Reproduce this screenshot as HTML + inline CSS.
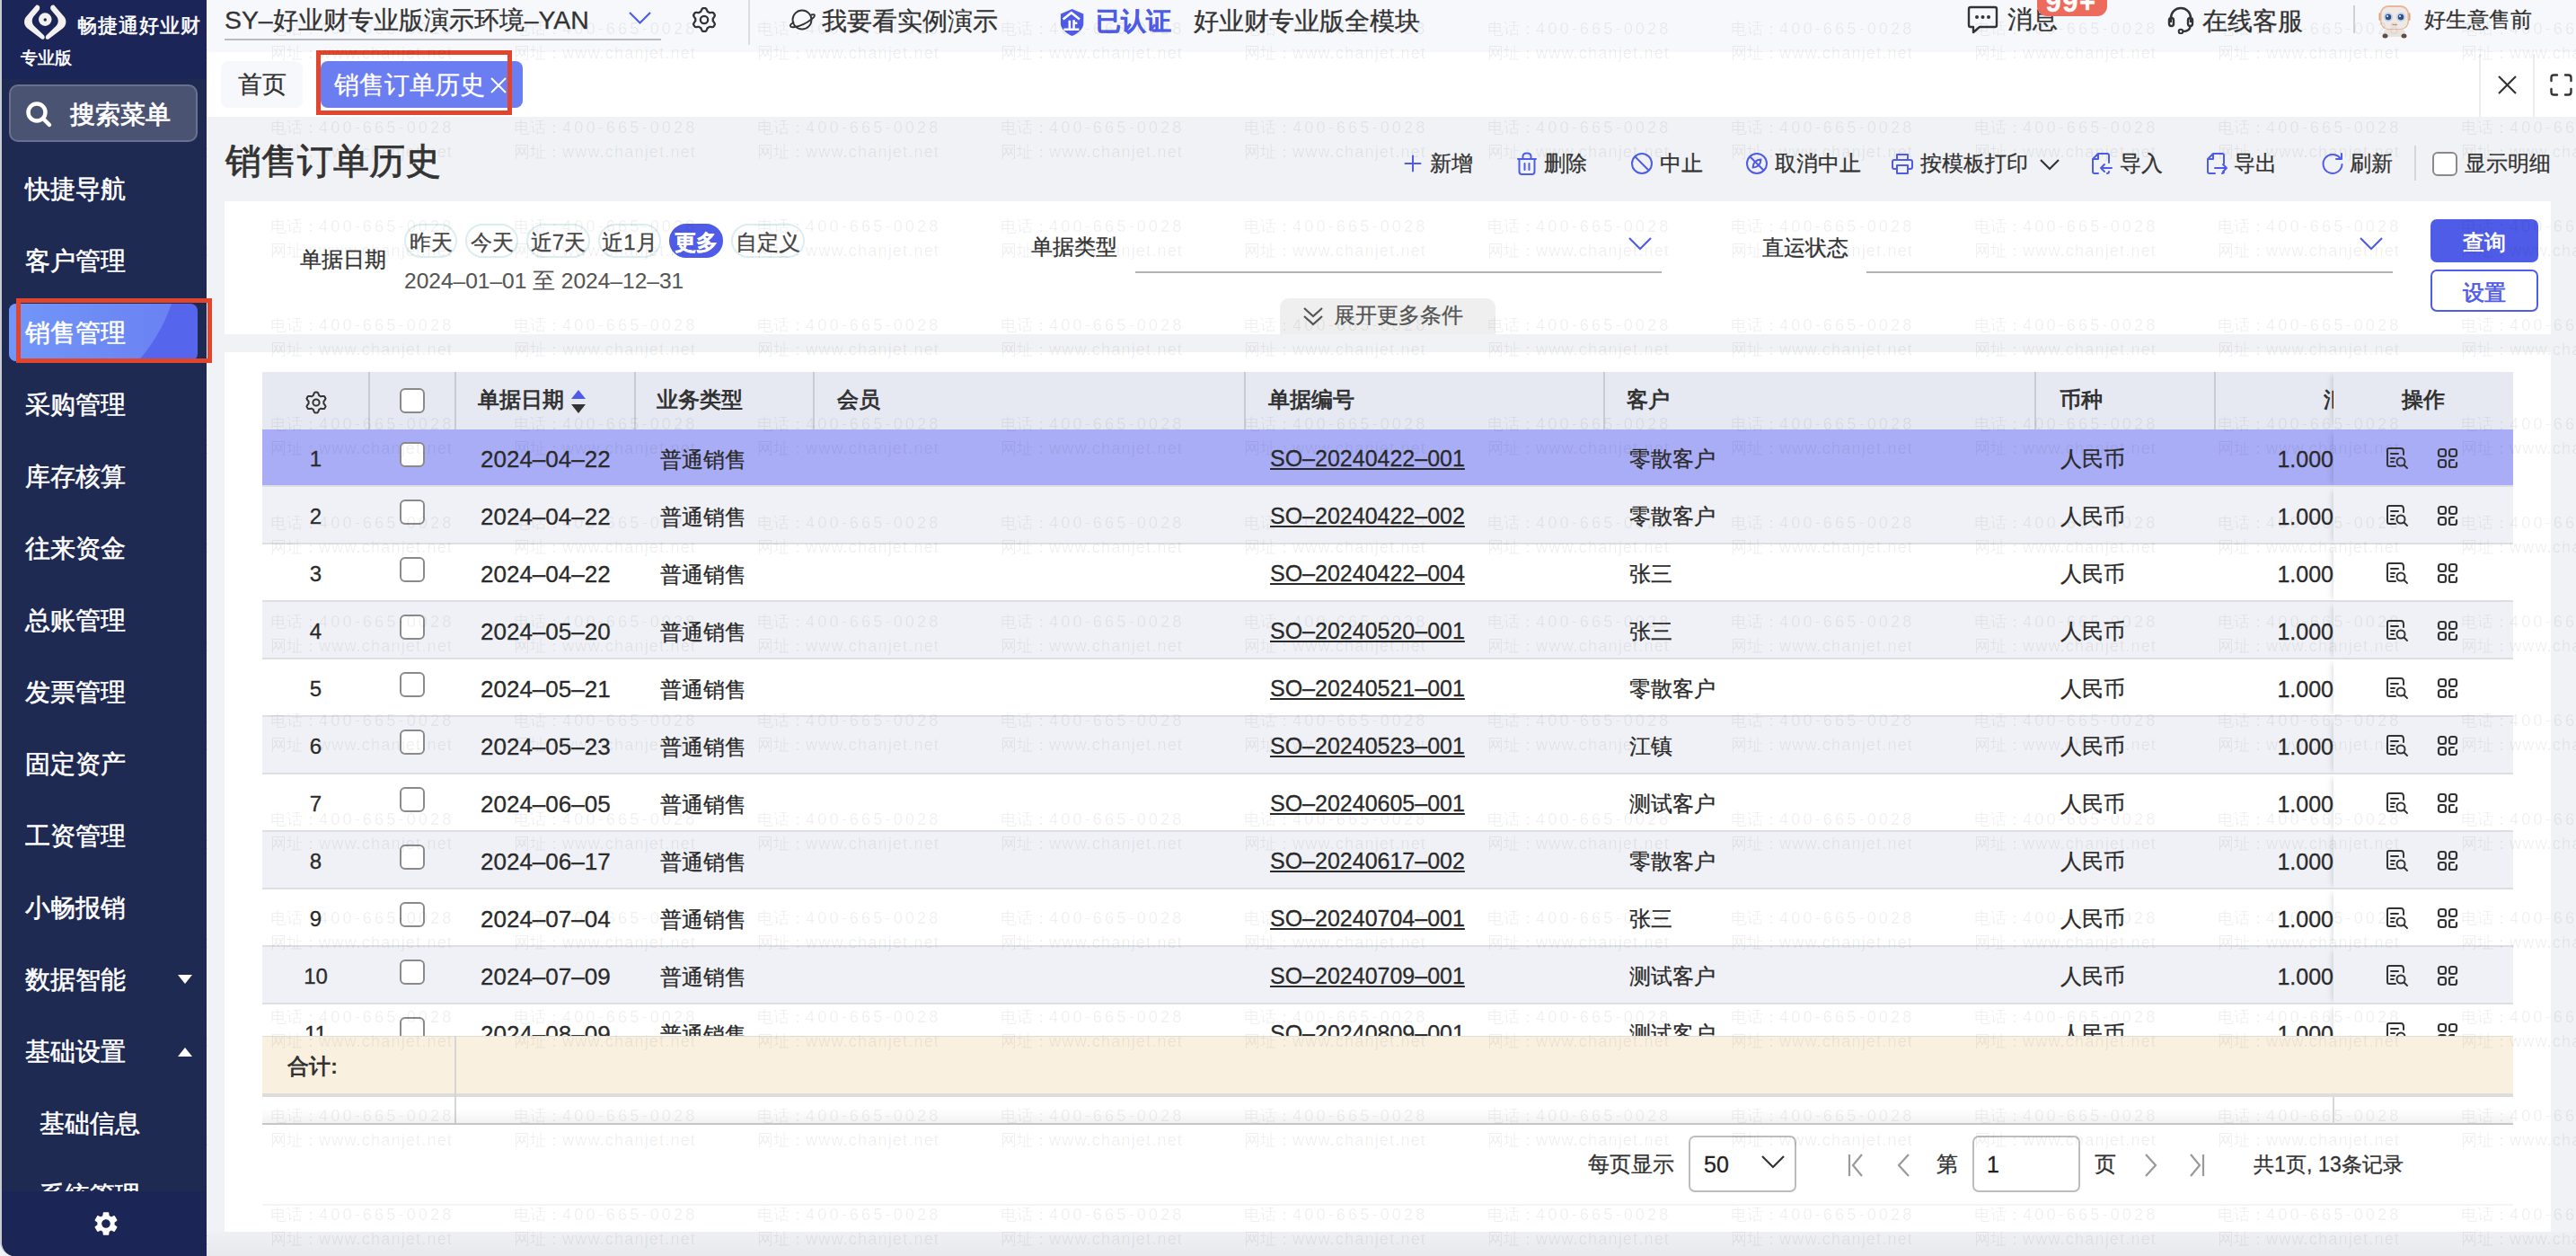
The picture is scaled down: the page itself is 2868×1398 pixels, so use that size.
<!DOCTYPE html><html><head><meta charset="utf-8"><style>
*{box-sizing:border-box;margin:0;padding:0}
html,body{width:2868px;height:1398px;overflow:hidden;background:#f1f2f5;font-family:"Liberation Sans",sans-serif;color:#333}
body{-webkit-text-stroke:0.3px}
.abs{position:absolute;white-space:nowrap}
#sb{position:absolute;left:0;top:0;width:230px;height:1398px;background:#1f2a52;border-left:2px solid #c9cbd2;border-bottom-left-radius:16px;overflow:hidden}
.mi{position:absolute;left:26px;font-size:28px;line-height:32px;color:#fff;-webkit-text-stroke:0.55px #fff}
#top{position:absolute;left:230px;top:0;width:2638px;height:58px;background:#f7f8fc}
#tabs{position:absolute;left:230px;top:58px;width:2638px;height:72px;background:#fff}
.t28{font-size:28px;line-height:32px;color:#333}
.card{position:absolute;background:#fff}
.tb{position:absolute;top:166px;font-size:24px;line-height:32px;color:#333}
.tb svg{position:absolute}
.chip{position:absolute;top:249px;height:38px;border:2px solid #dcedef;border-radius:19px;font-size:24px;line-height:38px;text-align:center;color:#444}
.hd{position:absolute;top:414px;height:64px;background:#e6e9f2}
.th{position:absolute;font-size:24px;line-height:32px;font-weight:bold;color:#333;-webkit-text-stroke:0}
.row{position:absolute;left:292px;width:2506px;height:64px;border-bottom:2px solid #dedfe3}
.td{position:absolute;font-size:24px;line-height:32px;color:#2a2a2a}
.wm{position:absolute;white-space:nowrap;font-size:18px;line-height:27px;-webkit-text-stroke:0.25px}
.cb{position:absolute;width:28px;height:28px;border:2px solid #8a8a8a;border-radius:6px;background:#fff}
</style></head><body>

<div id="sb">
<div class="abs" style="left:0;top:0;width:230px;height:88px;background:#1c2558"></div>
<svg class="abs" style="left:23px;top:3.5px" width="50.5" height="41" viewBox="0 0 52 42" preserveAspectRatio="none">
<path d="M16 1.5 C19.5 1 21 4.5 19 7.5 L12.5 15 C10.5 18 10.5 22 13 25 L24.5 36 C26.5 38.5 25 41.5 22 40.5 L6 28.5 C1 24.5 1 18 5 14 Z" fill="#f2f1f0"/>
<path d="M36 1.5 C32.5 1 31 4.5 33 7.5 L39.5 15 C41.5 18 41.5 22 39 25 L27.5 36 C25.5 38.5 27 41.5 30 40.5 L46 28.5 C51 24.5 51 18 47 14 Z" fill="#f2f1f0"/>
<circle cx="26" cy="18" r="7.5" fill="#f2f1f0"/><circle cx="26" cy="18.5" r="1.8" fill="#1f2a52"/>
</svg>
<div class="abs" style="left:84px;top:16px;font-size:22px;line-height:26px;color:#fff;-webkit-text-stroke:0.6px #fff;letter-spacing:1px">畅捷通好业财</div>
<div class="abs" style="left:21px;top:53px;font-size:19px;line-height:24px;color:#fff;-webkit-text-stroke:0.6px #fff">专业版</div>
<div class="abs" style="left:8px;top:94px;width:210px;height:64px;background:#4b5373;border:2px solid #6a7190;border-radius:10px"></div>
<svg class="abs" style="left:26px;top:112px" width="32" height="32" viewBox="0 0 32 32"><circle cx="13" cy="13" r="9.5" fill="none" stroke="#fff" stroke-width="4.5"/><path d="M20 20 L27 27" stroke="#fff" stroke-width="4.5" stroke-linecap="round"/></svg>
<div class="abs" style="left:76px;top:111px;font-size:28px;line-height:34px;color:#fff;-webkit-text-stroke:0.8px #fff">搜索菜单</div>
<div class="abs" style="left:8px;top:338px;width:210px;height:64px;border-radius:8px;background:#5565ec;overflow:hidden">
<div style="position:absolute;left:-184px;top:-248px;width:375px;height:375px;border-radius:50%;background:linear-gradient(90deg,#7196f8 50%,#6a80f2 100%)"></div></div>
<div class="mi" style="top:195px">快捷导航</div>
<div class="mi" style="top:275px">客户管理</div>
<div class="mi" style="top:355px">销售管理</div>
<div class="mi" style="top:435px">采购管理</div>
<div class="mi" style="top:515px">库存核算</div>
<div class="mi" style="top:595px">往来资金</div>
<div class="mi" style="top:675px">总账管理</div>
<div class="mi" style="top:755px">发票管理</div>
<div class="mi" style="top:835px">固定资产</div>
<div class="mi" style="top:915px">工资管理</div>
<div class="mi" style="top:995px">小畅报销</div>
<div class="mi" style="top:1075px">数据智能</div>
<div class="mi" style="top:1155px">基础设置</div>
<div class="mi" style="left:42px;top:1235px">基础信息</div>
<div class="mi" style="left:42px;top:1315px">系统管理</div>
<svg class="abs" style="left:194px;top:1084px" width="20" height="12"><path d="M2 1 L18 1 L10 11 Z" fill="#fff"/></svg>
<svg class="abs" style="left:194px;top:1165px" width="20" height="12"><path d="M2 11 L18 11 L10 1 Z" fill="#fff"/></svg>
<div class="abs" style="left:0;top:1326px;width:230px;height:72px;background:#1b2657"></div>
<svg class="abs" style="left:100px;top:1346px" width="32" height="32" viewBox="0 0 24 24"><path fill="#fff" d="M19.14 12.94c.04-.3.06-.61.06-.94 0-.32-.02-.64-.07-.94l2.03-1.58a.49.49 0 0 0 .12-.61l-1.92-3.32a.488.488 0 0 0-.59-.22l-2.39.96c-.5-.38-1.03-.7-1.62-.94l-.36-2.54a.484.484 0 0 0-.48-.41h-3.84c-.24 0-.43.17-.47.41l-.36 2.54c-.59.24-1.13.57-1.62.94l-2.39-.96c-.22-.08-.47 0-.59.22L2.74 8.87c-.12.21-.08.47.12.61l2.03 1.58c-.05.3-.09.63-.09.94s.02.64.07.94l-2.03 1.58a.49.49 0 0 0-.12.61l1.92 3.32c.12.22.37.29.59.22l2.39-.96c.5.38 1.03.7 1.62.94l.36 2.54c.05.24.24.41.48.41h3.84c.24 0 .44-.17.47-.41l.36-2.54c.59-.24 1.13-.56 1.62-.94l2.39.96c.22.08.47 0 .59-.22l1.92-3.32c.12-.22.07-.47-.12-.61l-2.01-1.58zM12 15.6c-1.98 0-3.6-1.62-3.6-3.6s1.62-3.6 3.6-3.6 3.6 1.62 3.6 3.6-1.62 3.6-3.6 3.6z"/></svg>
</div>
<div id="top"></div>
<div class="abs t28" style="left:250px;top:6px;font-size:28.4px">SY–好业财专业版演示环境–YAN</div>
<div class="abs" style="left:250px;top:43px;width:486px;height:2px;background:#b9bbc2"></div>
<svg class="abs" style="left:699px;top:12px" width="27" height="16"><path d="M2 2 L13.5 13.5 L25 2" fill="none" stroke="#4f5ce8" stroke-width="2.2"/></svg>
<svg class="abs" style="left:769px;top:7px" width="30" height="30" viewBox="0 0 30 30"><path fill="none" stroke="#333" stroke-width="2.3" stroke-linejoin="round" d="M15.00 2.10 L15.56 2.11 L16.12 2.15 L16.68 2.23 L17.16 2.75 L17.58 3.37 L17.94 4.04 L18.24 4.71 L18.51 5.35 L18.76 5.93 L19.14 6.12 L19.53 6.31 L19.90 6.51 L20.27 6.73 L20.62 6.97 L20.98 7.21 L21.60 7.14 L22.29 7.05 L23.03 6.97 L23.78 6.95 L24.53 7.01 L25.22 7.16 L25.57 7.60 L25.88 8.07 L26.17 8.55 L26.44 9.04 L26.69 9.55 L26.90 10.07 L26.69 10.75 L26.36 11.42 L25.96 12.06 L25.53 12.66 L25.11 13.22 L24.73 13.72 L24.76 14.15 L24.79 14.57 L24.80 15.00 L24.79 15.43 L24.76 15.85 L24.73 16.28 L25.11 16.78 L25.53 17.34 L25.96 17.94 L26.36 18.58 L26.69 19.25 L26.90 19.93 L26.69 20.45 L26.44 20.96 L26.17 21.45 L25.88 21.93 L25.57 22.40 L25.22 22.84 L24.53 22.99 L23.78 23.05 L23.03 23.03 L22.29 22.95 L21.60 22.86 L20.98 22.79 L20.62 23.03 L20.27 23.27 L19.90 23.49 L19.53 23.69 L19.14 23.88 L18.76 24.07 L18.51 24.65 L18.24 25.29 L17.94 25.96 L17.58 26.63 L17.16 27.25 L16.68 27.77 L16.12 27.85 L15.56 27.89 L15.00 27.90 L14.44 27.89 L13.88 27.85 L13.32 27.77 L12.84 27.25 L12.42 26.63 L12.06 25.96 L11.76 25.29 L11.49 24.65 L11.24 24.07 L10.86 23.88 L10.47 23.69 L10.10 23.49 L9.73 23.27 L9.38 23.03 L9.02 22.79 L8.40 22.86 L7.71 22.95 L6.97 23.03 L6.22 23.05 L5.47 22.99 L4.78 22.84 L4.43 22.40 L4.12 21.93 L3.83 21.45 L3.56 20.96 L3.31 20.45 L3.10 19.93 L3.31 19.25 L3.64 18.58 L4.04 17.94 L4.47 17.34 L4.89 16.78 L5.27 16.28 L5.24 15.85 L5.21 15.43 L5.20 15.00 L5.21 14.57 L5.24 14.15 L5.27 13.72 L4.89 13.22 L4.47 12.66 L4.04 12.06 L3.64 11.42 L3.31 10.75 L3.10 10.07 L3.31 9.55 L3.56 9.04 L3.83 8.55 L4.12 8.07 L4.43 7.60 L4.78 7.16 L5.47 7.01 L6.22 6.95 L6.97 6.97 L7.71 7.05 L8.40 7.14 L9.02 7.21 L9.38 6.97 L9.73 6.73 L10.10 6.51 L10.47 6.31 L10.86 6.12 L11.24 5.93 L11.49 5.35 L11.76 4.71 L12.06 4.04 L12.42 3.37 L12.84 2.75 L13.32 2.23 L13.88 2.15 L14.44 2.11 Z"/><circle cx="15" cy="15" r="4.2" fill="none" stroke="#333" stroke-width="2.3"/></svg>
<div class="abs" style="left:833px;top:0;width:2px;height:50px;background:#dcdde2"></div>
<svg class="abs" style="left:877px;top:9px" width="32" height="26" viewBox="0 0 32 26"><circle cx="16" cy="13" r="10.5" fill="none" stroke="#333" stroke-width="1.9"/><path d="M6.5 16 C1 19 2 22 8 21 C14 20 22 16 27 12 C31 9 31 6 26.5 7.5" fill="none" stroke="#333" stroke-width="1.9" stroke-linecap="round"/></svg>
<div class="abs t28" style="left:915px;top:8px">我要看实例演示</div>
<svg class="abs" style="left:1180px;top:9px" width="28" height="32" viewBox="0 0 28 32"><path d="M13.6 0.9 L26.3 6.5 L26.3 17.4 C26.3 23 20 28 13.6 31 C7.2 28 0.9 23 0.9 17.4 L0.9 6.5 Z" fill="#4f5ce8"/><path d="M3.6 12.6 L12.8 5.2 L22 12.6 M10.8 13.8 V23.6 M15.6 13.2 V23.6 M15.6 16.8 H19.4 M4.4 23.8 H21.4" fill="none" stroke="#fff" stroke-width="2.6"/></svg>
<div class="abs t28" style="left:1220px;top:8px;color:#4f5ce8;font-weight:bold">已认证</div>
<div class="abs t28" style="left:1329px;top:8px">好业财专业版全模块</div>
<svg class="abs" style="left:2190px;top:5px" width="35" height="34" viewBox="0 0 35 34"><path d="M4 3 H31 C32.5 3 33 3.5 33 5 V23 C33 24.5 32.5 25 31 25 H14 L7 31 V25 H4 C2.5 25 2 24.5 2 23 V5 C2 3.5 2.5 3 4 3 Z" fill="none" stroke="#333" stroke-width="2.4" stroke-linejoin="round"/><circle cx="11" cy="14" r="2" fill="#333"/><circle cx="17.5" cy="14" r="2" fill="#333"/><circle cx="24" cy="14" r="2" fill="#333"/></svg>
<div class="abs t28" style="left:2235px;top:6px">消息</div>
<div class="abs" style="left:2268px;top:-14px;width:78px;height:32px;background:#ec6b5c;border-radius:11px"></div>
<div class="abs" style="left:2266px;top:-13px;width:80px;font-size:31px;line-height:31px;color:#fff;font-weight:bold;text-align:center;letter-spacing:1.5px">99+</div>
<svg class="abs" style="left:2412px;top:6px" width="32" height="32" viewBox="0 0 32 32"><path d="M5 19 V14 C5 7.5 10 3 16 3 C22 3 27 7.5 27 14 V19" fill="none" stroke="#333" stroke-width="2.4"/><rect x="3" y="14" width="5" height="9" rx="2.5" fill="none" stroke="#333" stroke-width="2.4"/><rect x="24" y="14" width="5" height="9" rx="2.5" fill="none" stroke="#333" stroke-width="2.4"/><path d="M26.5 23 C26.5 27 23 29 18 29" fill="none" stroke="#333" stroke-width="2.4"/><circle cx="16" cy="29" r="2.3" fill="none" stroke="#333" stroke-width="2"/></svg>
<div class="abs t28" style="left:2452px;top:8px">在线客服</div>
<div class="abs" style="left:2620px;top:6px;width:2px;height:31px;background:#d0d1d6"></div>
<svg class="abs" style="left:2646px;top:4px" width="40" height="40" viewBox="0 0 40 40"><path d="M8 33 C8 29 11 28 14 28 H26 C29 28 32 29 32 33 V37 H8 Z" fill="#e9e3de"/><ellipse cx="9.5" cy="36" rx="3" ry="2.5" fill="#5e4c45"/><ellipse cx="30.5" cy="36" rx="3" ry="2.5" fill="#5e4c45"/><rect x="2.5" y="10" width="3" height="9" rx="1.5" fill="#d9a486"/><rect x="34.5" y="10" width="3" height="9" rx="1.5" fill="#d9a486"/><rect x="4" y="2" width="32" height="27" rx="9" fill="#e8b89a"/><rect x="5.5" y="4" width="29" height="24" rx="8" fill="#efe9e5"/><circle cx="13" cy="15" r="5" fill="#bcd0ea"/><circle cx="27" cy="15" r="5" fill="#bcd0ea"/><circle cx="13" cy="15" r="3.2" fill="#2f4f86"/><circle cx="27" cy="15" r="3.2" fill="#2f4f86"/><circle cx="12" cy="14" r="1" fill="#fff"/><circle cx="26" cy="14" r="1" fill="#fff"/><path d="M17.5 23 Q20 24.5 22.5 23" stroke="#c9805e" stroke-width="1.2" fill="none"/></svg>
<div class="abs" style="left:2699px;top:6px;font-size:24px;line-height:32px;color:#333">好生意售前</div>
<div id="tabs"></div>
<div class="abs" style="left:246px;top:68px;width:91px;height:52px;background:#f6f8fc;border-radius:8px"></div>
<div class="abs t28" style="left:265px;top:78px;font-size:27px">首页</div>
<div class="abs" style="left:357px;top:68px;width:225px;height:52px;background:#6a7ef1;border-radius:8px"></div>
<div class="abs t28" style="left:372px;top:79px;font-size:28px;color:#fff">销售订单历史</div>
<svg class="abs" style="left:545px;top:85px" width="20" height="20"><path d="M2 2 L18 18 M18 2 L2 18" stroke="#fff" stroke-width="2"/></svg>
<div class="abs" style="left:2760px;top:60px;width:2px;height:70px;background:#ececef"></div>
<div class="abs" style="left:2820px;top:60px;width:2px;height:70px;background:#ececef"></div>
<svg class="abs" style="left:2780px;top:83px" width="23" height="23"><path d="M2 2 L21 21 M21 2 L2 21" stroke="#333" stroke-width="2.2"/></svg>
<svg class="abs" style="left:2838px;top:81px" width="27" height="27"><path d="M2.5 9 V5.5 Q2.5 2.5 5.5 2.5 H9 M18 2.5 H21.5 Q24.5 2.5 24.5 5.5 V9 M24.5 18 V21.5 Q24.5 24.5 21.5 24.5 H18 M9 24.5 H5.5 Q2.5 24.5 2.5 21.5 V18" fill="none" stroke="#333" stroke-width="2.4" stroke-linecap="round"/></svg>
<div class="abs" style="left:251px;top:155px;font-size:40px;line-height:48px;color:#333;-webkit-text-stroke:0.8px #333">销售订单历史</div>
<svg class="abs" style="left:1559px;top:168px" width="28" height="28" viewBox="0 0 28 28"><path d="M14 5.5 V22.5 M5.5 14 H22.5" fill="none" stroke="#4f5ce8" stroke-width="2" stroke-linecap="round" stroke-linejoin="round"/></svg>
<div class="tb" style="left:1592px">新增</div>
<svg class="abs" style="left:1686px;top:168px" width="28" height="28" viewBox="0 0 28 28"><path d="M5.5 9 V23 C5.5 25 6.5 26 8.5 26 H19.5 C21.5 26 22.5 25 22.5 23 V9 M4 9 H24 M9.5 9 V6 C9.5 3.5 11 2.5 14 2.5 C17 2.5 18.5 3.5 18.5 6 V9 M11.5 14 V21 M16.5 14 V21" fill="none" stroke="#4f5ce8" stroke-width="2" stroke-linecap="round" stroke-linejoin="round"/></svg>
<div class="tb" style="left:1719px">删除</div>
<svg class="abs" style="left:1814px;top:168px" width="28" height="28" viewBox="0 0 28 28"><circle cx="14" cy="14" r="11" fill="none" stroke="#4f5ce8" stroke-width="2" stroke-linecap="round" stroke-linejoin="round"/><path d="M6.5 6.5 L21.5 21.5" fill="none" stroke="#4f5ce8" stroke-width="2" stroke-linecap="round" stroke-linejoin="round"/></svg>
<div class="tb" style="left:1848px">中止</div>
<svg class="abs" style="left:1942px;top:168px" width="28" height="28" viewBox="0 0 28 28"><circle cx="14" cy="14" r="11" fill="none" stroke="#4f5ce8" stroke-width="2" stroke-linecap="round" stroke-linejoin="round"/><path d="M6.5 6.5 L21.5 21.5" fill="none" stroke="#4f5ce8" stroke-width="2" stroke-linecap="round" stroke-linejoin="round"/><path d="M9.5 18.5 Q10 10 18.5 9.5 Q18 18 9.5 18.5 Z" fill="none" stroke="#4f5ce8" stroke-width="2" stroke-linecap="round" stroke-linejoin="round"/></svg>
<div class="tb" style="left:1976px">取消中止</div>
<svg class="abs" style="left:2104px;top:168px" width="28" height="28" viewBox="0 0 28 28"><path d="M8 10 V4 H20 V10 M8 20 H5 C4 20 3 19 3 18 V12 C3 11 4 10 5 10 H23 C24 10 25 11 25 12 V18 C25 19 24 20 23 20 H20 M8 16 H20 V25 H8 Z" fill="none" stroke="#4f5ce8" stroke-width="2" stroke-linecap="round" stroke-linejoin="round"/></svg>
<div class="tb" style="left:2138px">按模板打印</div>
<svg class="abs" style="left:2270px;top:175px" width="24" height="16"><path d="M2 3 L12 13 L22 3" fill="none" stroke="#333" stroke-width="2.2"/></svg>
<svg class="abs" style="left:2326px;top:168px" width="28" height="28" viewBox="0 0 28 28"><path d="M22 13 V5 C22 4 21 3 20 3 H10 L4 9 V23 C4 24 5 25 6 25 H10 M10 3 V9 H4 M22 23 C22 24 21 25 20 25" fill="none" stroke="#4f5ce8" stroke-width="2" stroke-linecap="round" stroke-linejoin="round"/><path d="M25 19 H13 M17 15 L13 19 L17 23" fill="none" stroke="#4f5ce8" stroke-width="2" stroke-linecap="round" stroke-linejoin="round"/></svg>
<div class="tb" style="left:2360px">导入</div>
<svg class="abs" style="left:2454px;top:168px" width="28" height="28" viewBox="0 0 28 28"><path d="M22 14 V5 C22 4 21 3 20 3 H10 L4 9 V23 C4 24 5 25 6 25 H12 M10 3 V9 H4 M22 23 C22 24 21 25 20 25" fill="none" stroke="#4f5ce8" stroke-width="2" stroke-linecap="round" stroke-linejoin="round"/><path d="M12 19 H25 M21 15 L25 19 L21 23" fill="none" stroke="#4f5ce8" stroke-width="2" stroke-linecap="round" stroke-linejoin="round"/></svg>
<div class="tb" style="left:2487px">导出</div>
<svg class="abs" style="left:2583px;top:168px" width="28" height="28" viewBox="0 0 28 28"><path d="M23 9 A10.5 10.5 0 1 0 24.5 15" fill="none" stroke="#4f5ce8" stroke-width="2" stroke-linecap="round" stroke-linejoin="round"/><path d="M24 3 V9 H18" fill="none" stroke="#4f5ce8" stroke-width="2" stroke-linecap="round" stroke-linejoin="round"/></svg>
<div class="tb" style="left:2616px">刷新</div>
<div class="abs" style="left:2688px;top:162px;width:2px;height:39px;background:#d5d6db"></div>
<div class="cb" style="left:2708px;top:169px;width:28px;height:27px;"></div>
<div class="tb" style="left:2744px">显示明细</div>
<div class="card" style="left:250px;top:224px;width:2590px;height:148px"></div>
<div class="abs" style="left:334px;top:273px;font-size:24px;line-height:32px;color:#333">单据日期</div>
<div class="chip" style="left:450px;width:59px">昨天</div>
<div class="chip" style="left:518px;width:59px">今天</div>
<div class="chip" style="left:586px;width:71px">近7天</div>
<div class="chip" style="left:666px;width:70px">近1月</div>
<div class="chip" style="left:745px;width:60px;background:#4f5ce8;border-color:#4f5ce8;color:#fff;font-weight:bold">更多</div>
<div class="chip" style="left:814px;width:82px">自定义</div>
<div class="abs" style="left:450px;top:297px;font-size:24.5px;line-height:32px;color:#555;-webkit-text-stroke:0.1px">2024–01–01 至 2024–12–31</div>
<div class="abs" style="left:1148px;top:259px;font-size:24px;line-height:32px;color:#333">单据类型</div>
<div class="abs" style="left:1264px;top:302px;width:586px;height:2px;background:#b3b3b3"></div>
<svg class="abs" style="left:1812px;top:263px" width="28" height="17"><path d="M2 2 L14 14 L26 2" fill="none" stroke="#4f5ce8" stroke-width="2.2"/></svg>
<div class="abs" style="left:1962px;top:260px;font-size:24px;line-height:32px;color:#333">直运状态</div>
<div class="abs" style="left:2078px;top:302px;width:586px;height:2px;background:#b3b3b3"></div>
<svg class="abs" style="left:2626px;top:263px" width="28" height="17"><path d="M2 2 L14 14 L26 2" fill="none" stroke="#4f5ce8" stroke-width="2.2"/></svg>
<div class="abs" style="left:2706px;top:244px;width:120px;height:48px;background:#4f5ce8;border-radius:7px;color:#fff;font-size:24px;line-height:52px;text-align:center;-webkit-text-stroke:0.7px #fff">查询</div>
<div class="abs" style="left:2706px;top:300px;width:120px;height:47px;background:#fff;border:2px solid #4f5ce8;border-radius:7px;color:#4f5ce8;font-size:24px;line-height:47px;text-align:center;-webkit-text-stroke:0.7px #4f5ce8">设置</div>
<div class="abs" style="left:1425px;top:332px;width:240px;height:40px;background:#efefef;border-radius:10px 10px 0 0"></div>
<svg class="abs" style="left:1450px;top:340px" width="24" height="24"><path d="M2 3 L12 12 L22 3 M2 12 L12 21 L22 12" fill="none" stroke="#555" stroke-width="2.2"/></svg>
<div class="abs" style="left:1485px;top:335px;font-size:24px;line-height:32px;color:#555">展开更多条件</div>
<div class="card" style="left:250px;top:392px;width:2590px;height:979px"></div>
<div class="hd" style="left:292px;width:2506px"></div>
<div class="abs" style="left:410px;top:414px;width:2px;height:64px;background:#c9cbd3"></div>
<div class="abs" style="left:506px;top:414px;width:2px;height:64px;background:#c9cbd3"></div>
<div class="abs" style="left:706px;top:414px;width:2px;height:64px;background:#c9cbd3"></div>
<div class="abs" style="left:905px;top:414px;width:2px;height:64px;background:#c9cbd3"></div>
<div class="abs" style="left:1385px;top:414px;width:2px;height:64px;background:#c9cbd3"></div>
<div class="abs" style="left:1785px;top:414px;width:2px;height:64px;background:#c9cbd3"></div>
<div class="abs" style="left:2265px;top:414px;width:2px;height:64px;background:#c9cbd3"></div>
<div class="abs" style="left:2465px;top:414px;width:2px;height:64px;background:#c9cbd3"></div>
<svg class="abs" style="left:338px;top:434px" width="28" height="28" viewBox="0 0 28 28"><path fill="none" stroke="#333" stroke-width="2" stroke-linejoin="round" d="M14.00 2.60 L14.50 2.61 L14.99 2.64 L15.49 2.71 L15.90 3.22 L16.26 3.80 L16.56 4.44 L16.81 5.08 L17.03 5.68 L17.22 6.23 L17.55 6.39 L17.88 6.55 L18.20 6.73 L18.51 6.92 L18.82 7.12 L19.12 7.32 L19.69 7.22 L20.32 7.10 L21.00 7.00 L21.70 6.94 L22.39 6.96 L23.03 7.07 L23.34 7.46 L23.61 7.87 L23.87 8.30 L24.11 8.74 L24.33 9.18 L24.52 9.64 L24.29 10.25 L23.96 10.86 L23.56 11.44 L23.13 11.97 L22.72 12.46 L22.34 12.90 L22.37 13.27 L22.39 13.63 L22.40 14.00 L22.39 14.37 L22.37 14.73 L22.34 15.10 L22.72 15.54 L23.13 16.03 L23.56 16.56 L23.96 17.14 L24.29 17.75 L24.52 18.36 L24.33 18.82 L24.11 19.26 L23.87 19.70 L23.61 20.13 L23.34 20.54 L23.03 20.93 L22.39 21.04 L21.70 21.06 L21.00 21.00 L20.32 20.90 L19.69 20.78 L19.12 20.68 L18.82 20.88 L18.51 21.08 L18.20 21.27 L17.88 21.45 L17.55 21.61 L17.22 21.77 L17.03 22.32 L16.81 22.92 L16.56 23.56 L16.26 24.20 L15.90 24.78 L15.49 25.29 L14.99 25.36 L14.50 25.39 L14.00 25.40 L13.50 25.39 L13.01 25.36 L12.51 25.29 L12.10 24.78 L11.74 24.20 L11.44 23.56 L11.19 22.92 L10.97 22.32 L10.78 21.77 L10.45 21.61 L10.12 21.45 L9.80 21.27 L9.49 21.08 L9.18 20.88 L8.88 20.68 L8.31 20.78 L7.68 20.90 L7.00 21.00 L6.30 21.06 L5.61 21.04 L4.97 20.93 L4.66 20.54 L4.39 20.13 L4.13 19.70 L3.89 19.26 L3.67 18.82 L3.48 18.36 L3.71 17.75 L4.04 17.14 L4.44 16.56 L4.87 16.03 L5.28 15.54 L5.66 15.10 L5.63 14.73 L5.61 14.37 L5.60 14.00 L5.61 13.63 L5.63 13.27 L5.66 12.90 L5.28 12.46 L4.87 11.97 L4.44 11.44 L4.04 10.86 L3.71 10.25 L3.48 9.64 L3.67 9.18 L3.89 8.74 L4.13 8.30 L4.39 7.87 L4.66 7.46 L4.97 7.07 L5.61 6.96 L6.30 6.94 L7.00 7.00 L7.68 7.10 L8.31 7.22 L8.88 7.32 L9.18 7.12 L9.49 6.92 L9.80 6.73 L10.12 6.55 L10.45 6.39 L10.78 6.23 L10.97 5.68 L11.19 5.08 L11.44 4.44 L11.74 3.80 L12.10 3.22 L12.51 2.71 L13.01 2.64 L13.50 2.61 Z"/><circle cx="14" cy="14" r="3.6" fill="none" stroke="#333" stroke-width="2"/></svg>
<div class="cb" style="left:445px;top:432px"></div>
<div class="th" style="left:532px;top:429px">单据日期</div>
<svg class="abs" style="left:634px;top:433px" width="20" height="28"><path d="M10 1 L18 11 H2 Z" fill="#4f5ce8"/><path d="M10 27 L18 17 H2 Z" fill="#333"/></svg>
<div class="th" style="left:731px;top:429px">业务类型</div>
<div class="th" style="left:932px;top:429px">会员</div>
<div class="th" style="left:1412px;top:429px">单据编号</div>
<div class="th" style="left:1811px;top:429px">客户</div>
<div class="th" style="left:2293px;top:429px">币种</div>
<div class="th" style="left:2587px;top:429px">汇率</div>
<div class="abs" style="left:292px;top:478px;width:2506px;height:675px;overflow:hidden">
<div class="row" style="left:0;top:0px;background:#a9adf6"></div>
<div class="td" style="left:0;width:119px;text-align:center;top:17px">1</div>
<div class="cb" style="left:153px;top:14px"></div>
<div class="td" style="left:243px;top:17px;font-size:26px">2024–04–22</div>
<div class="td" style="left:443px;top:18px">普通销售</div>
<div class="td" style="left:1122px;top:16px;font-size:25px;text-decoration:underline;text-underline-offset:2px">SO–20240422–001</div>
<div class="td" style="left:1522px;top:17px">零散客户</div>
<div class="td" style="left:2002px;top:17px">人民币</div>
<div class="td" style="left:2200px;width:106px;text-align:right;top:17px;font-size:25px">1.000</div>
<div class="abs" style="left:2306px;top:0px;width:200px;height:64px;background:#a9adf6;border-bottom:2px solid #dedfe3;box-shadow:-6px 0 6px -4px rgba(0,0,0,0.12)"></div>
<svg class="abs" style="left:2364px;top:19px" width="28" height="26" viewBox="0 0 28 26"><path d="M17 2 H4 C3 2 2 3 2 4 V20 C2 21 3 22 4 22 H11 M20 9 V6 C20 3.5 19 2 17 2 M6 8 H14 M6 13 H10 M6 17 H9" fill="none" stroke="#333" stroke-width="2" stroke-linecap="round"/><circle cx="17" cy="17" r="4.5" fill="none" stroke="#333" stroke-width="2"/><path d="M20.5 20.5 L24 24" stroke="#333" stroke-width="2" stroke-linecap="round"/></svg>
<svg class="abs" style="left:2421px;top:20px" width="24" height="24" viewBox="0 0 24 24"><rect x="2" y="2" width="8" height="8" rx="2.5" fill="none" stroke="#333" stroke-width="2.2"/><rect x="14" y="2" width="8" height="8" rx="2.5" fill="none" stroke="#333" stroke-width="2.2"/><rect x="2" y="14" width="8" height="8" rx="2.5" fill="none" stroke="#333" stroke-width="2.2"/><path d="M22 17 V20 C22 21 21 22 20 22 H16 C15 22 14 21 14 20 V16 C14 15 15 14 16 14 H19" fill="none" stroke="#333" stroke-width="2.2" stroke-linecap="round"/></svg>
<div class="row" style="left:0;top:64px;background:#f0f1f6"></div>
<div class="td" style="left:0;width:119px;text-align:center;top:81px">2</div>
<div class="cb" style="left:153px;top:78px"></div>
<div class="td" style="left:243px;top:81px;font-size:26px">2024–04–22</div>
<div class="td" style="left:443px;top:82px">普通销售</div>
<div class="td" style="left:1122px;top:80px;font-size:25px;text-decoration:underline;text-underline-offset:2px">SO–20240422–002</div>
<div class="td" style="left:1522px;top:81px">零散客户</div>
<div class="td" style="left:2002px;top:81px">人民币</div>
<div class="td" style="left:2200px;width:106px;text-align:right;top:81px;font-size:25px">1.000</div>
<div class="abs" style="left:2306px;top:64px;width:200px;height:64px;background:#f0f1f6;border-bottom:2px solid #dedfe3;box-shadow:-6px 0 6px -4px rgba(0,0,0,0.12)"></div>
<svg class="abs" style="left:2364px;top:83px" width="28" height="26" viewBox="0 0 28 26"><path d="M17 2 H4 C3 2 2 3 2 4 V20 C2 21 3 22 4 22 H11 M20 9 V6 C20 3.5 19 2 17 2 M6 8 H14 M6 13 H10 M6 17 H9" fill="none" stroke="#333" stroke-width="2" stroke-linecap="round"/><circle cx="17" cy="17" r="4.5" fill="none" stroke="#333" stroke-width="2"/><path d="M20.5 20.5 L24 24" stroke="#333" stroke-width="2" stroke-linecap="round"/></svg>
<svg class="abs" style="left:2421px;top:84px" width="24" height="24" viewBox="0 0 24 24"><rect x="2" y="2" width="8" height="8" rx="2.5" fill="none" stroke="#333" stroke-width="2.2"/><rect x="14" y="2" width="8" height="8" rx="2.5" fill="none" stroke="#333" stroke-width="2.2"/><rect x="2" y="14" width="8" height="8" rx="2.5" fill="none" stroke="#333" stroke-width="2.2"/><path d="M22 17 V20 C22 21 21 22 20 22 H16 C15 22 14 21 14 20 V16 C14 15 15 14 16 14 H19" fill="none" stroke="#333" stroke-width="2.2" stroke-linecap="round"/></svg>
<div class="row" style="left:0;top:128px;background:#fff"></div>
<div class="td" style="left:0;width:119px;text-align:center;top:145px">3</div>
<div class="cb" style="left:153px;top:142px"></div>
<div class="td" style="left:243px;top:145px;font-size:26px">2024–04–22</div>
<div class="td" style="left:443px;top:146px">普通销售</div>
<div class="td" style="left:1122px;top:144px;font-size:25px;text-decoration:underline;text-underline-offset:2px">SO–20240422–004</div>
<div class="td" style="left:1522px;top:145px">张三</div>
<div class="td" style="left:2002px;top:145px">人民币</div>
<div class="td" style="left:2200px;width:106px;text-align:right;top:145px;font-size:25px">1.000</div>
<div class="abs" style="left:2306px;top:128px;width:200px;height:64px;background:#fff;border-bottom:2px solid #dedfe3;box-shadow:-6px 0 6px -4px rgba(0,0,0,0.12)"></div>
<svg class="abs" style="left:2364px;top:147px" width="28" height="26" viewBox="0 0 28 26"><path d="M17 2 H4 C3 2 2 3 2 4 V20 C2 21 3 22 4 22 H11 M20 9 V6 C20 3.5 19 2 17 2 M6 8 H14 M6 13 H10 M6 17 H9" fill="none" stroke="#333" stroke-width="2" stroke-linecap="round"/><circle cx="17" cy="17" r="4.5" fill="none" stroke="#333" stroke-width="2"/><path d="M20.5 20.5 L24 24" stroke="#333" stroke-width="2" stroke-linecap="round"/></svg>
<svg class="abs" style="left:2421px;top:148px" width="24" height="24" viewBox="0 0 24 24"><rect x="2" y="2" width="8" height="8" rx="2.5" fill="none" stroke="#333" stroke-width="2.2"/><rect x="14" y="2" width="8" height="8" rx="2.5" fill="none" stroke="#333" stroke-width="2.2"/><rect x="2" y="14" width="8" height="8" rx="2.5" fill="none" stroke="#333" stroke-width="2.2"/><path d="M22 17 V20 C22 21 21 22 20 22 H16 C15 22 14 21 14 20 V16 C14 15 15 14 16 14 H19" fill="none" stroke="#333" stroke-width="2.2" stroke-linecap="round"/></svg>
<div class="row" style="left:0;top:192px;background:#f0f1f6"></div>
<div class="td" style="left:0;width:119px;text-align:center;top:209px">4</div>
<div class="cb" style="left:153px;top:206px"></div>
<div class="td" style="left:243px;top:209px;font-size:26px">2024–05–20</div>
<div class="td" style="left:443px;top:210px">普通销售</div>
<div class="td" style="left:1122px;top:208px;font-size:25px;text-decoration:underline;text-underline-offset:2px">SO–20240520–001</div>
<div class="td" style="left:1522px;top:209px">张三</div>
<div class="td" style="left:2002px;top:209px">人民币</div>
<div class="td" style="left:2200px;width:106px;text-align:right;top:209px;font-size:25px">1.000</div>
<div class="abs" style="left:2306px;top:192px;width:200px;height:64px;background:#f0f1f6;border-bottom:2px solid #dedfe3;box-shadow:-6px 0 6px -4px rgba(0,0,0,0.12)"></div>
<svg class="abs" style="left:2364px;top:211px" width="28" height="26" viewBox="0 0 28 26"><path d="M17 2 H4 C3 2 2 3 2 4 V20 C2 21 3 22 4 22 H11 M20 9 V6 C20 3.5 19 2 17 2 M6 8 H14 M6 13 H10 M6 17 H9" fill="none" stroke="#333" stroke-width="2" stroke-linecap="round"/><circle cx="17" cy="17" r="4.5" fill="none" stroke="#333" stroke-width="2"/><path d="M20.5 20.5 L24 24" stroke="#333" stroke-width="2" stroke-linecap="round"/></svg>
<svg class="abs" style="left:2421px;top:212px" width="24" height="24" viewBox="0 0 24 24"><rect x="2" y="2" width="8" height="8" rx="2.5" fill="none" stroke="#333" stroke-width="2.2"/><rect x="14" y="2" width="8" height="8" rx="2.5" fill="none" stroke="#333" stroke-width="2.2"/><rect x="2" y="14" width="8" height="8" rx="2.5" fill="none" stroke="#333" stroke-width="2.2"/><path d="M22 17 V20 C22 21 21 22 20 22 H16 C15 22 14 21 14 20 V16 C14 15 15 14 16 14 H19" fill="none" stroke="#333" stroke-width="2.2" stroke-linecap="round"/></svg>
<div class="row" style="left:0;top:256px;background:#fff"></div>
<div class="td" style="left:0;width:119px;text-align:center;top:273px">5</div>
<div class="cb" style="left:153px;top:270px"></div>
<div class="td" style="left:243px;top:273px;font-size:26px">2024–05–21</div>
<div class="td" style="left:443px;top:274px">普通销售</div>
<div class="td" style="left:1122px;top:272px;font-size:25px;text-decoration:underline;text-underline-offset:2px">SO–20240521–001</div>
<div class="td" style="left:1522px;top:273px">零散客户</div>
<div class="td" style="left:2002px;top:273px">人民币</div>
<div class="td" style="left:2200px;width:106px;text-align:right;top:273px;font-size:25px">1.000</div>
<div class="abs" style="left:2306px;top:256px;width:200px;height:64px;background:#fff;border-bottom:2px solid #dedfe3;box-shadow:-6px 0 6px -4px rgba(0,0,0,0.12)"></div>
<svg class="abs" style="left:2364px;top:275px" width="28" height="26" viewBox="0 0 28 26"><path d="M17 2 H4 C3 2 2 3 2 4 V20 C2 21 3 22 4 22 H11 M20 9 V6 C20 3.5 19 2 17 2 M6 8 H14 M6 13 H10 M6 17 H9" fill="none" stroke="#333" stroke-width="2" stroke-linecap="round"/><circle cx="17" cy="17" r="4.5" fill="none" stroke="#333" stroke-width="2"/><path d="M20.5 20.5 L24 24" stroke="#333" stroke-width="2" stroke-linecap="round"/></svg>
<svg class="abs" style="left:2421px;top:276px" width="24" height="24" viewBox="0 0 24 24"><rect x="2" y="2" width="8" height="8" rx="2.5" fill="none" stroke="#333" stroke-width="2.2"/><rect x="14" y="2" width="8" height="8" rx="2.5" fill="none" stroke="#333" stroke-width="2.2"/><rect x="2" y="14" width="8" height="8" rx="2.5" fill="none" stroke="#333" stroke-width="2.2"/><path d="M22 17 V20 C22 21 21 22 20 22 H16 C15 22 14 21 14 20 V16 C14 15 15 14 16 14 H19" fill="none" stroke="#333" stroke-width="2.2" stroke-linecap="round"/></svg>
<div class="row" style="left:0;top:320px;background:#f0f1f6"></div>
<div class="td" style="left:0;width:119px;text-align:center;top:337px">6</div>
<div class="cb" style="left:153px;top:334px"></div>
<div class="td" style="left:243px;top:337px;font-size:26px">2024–05–23</div>
<div class="td" style="left:443px;top:338px">普通销售</div>
<div class="td" style="left:1122px;top:336px;font-size:25px;text-decoration:underline;text-underline-offset:2px">SO–20240523–001</div>
<div class="td" style="left:1522px;top:337px">江镇</div>
<div class="td" style="left:2002px;top:337px">人民币</div>
<div class="td" style="left:2200px;width:106px;text-align:right;top:337px;font-size:25px">1.000</div>
<div class="abs" style="left:2306px;top:320px;width:200px;height:64px;background:#f0f1f6;border-bottom:2px solid #dedfe3;box-shadow:-6px 0 6px -4px rgba(0,0,0,0.12)"></div>
<svg class="abs" style="left:2364px;top:339px" width="28" height="26" viewBox="0 0 28 26"><path d="M17 2 H4 C3 2 2 3 2 4 V20 C2 21 3 22 4 22 H11 M20 9 V6 C20 3.5 19 2 17 2 M6 8 H14 M6 13 H10 M6 17 H9" fill="none" stroke="#333" stroke-width="2" stroke-linecap="round"/><circle cx="17" cy="17" r="4.5" fill="none" stroke="#333" stroke-width="2"/><path d="M20.5 20.5 L24 24" stroke="#333" stroke-width="2" stroke-linecap="round"/></svg>
<svg class="abs" style="left:2421px;top:340px" width="24" height="24" viewBox="0 0 24 24"><rect x="2" y="2" width="8" height="8" rx="2.5" fill="none" stroke="#333" stroke-width="2.2"/><rect x="14" y="2" width="8" height="8" rx="2.5" fill="none" stroke="#333" stroke-width="2.2"/><rect x="2" y="14" width="8" height="8" rx="2.5" fill="none" stroke="#333" stroke-width="2.2"/><path d="M22 17 V20 C22 21 21 22 20 22 H16 C15 22 14 21 14 20 V16 C14 15 15 14 16 14 H19" fill="none" stroke="#333" stroke-width="2.2" stroke-linecap="round"/></svg>
<div class="row" style="left:0;top:384px;background:#fff"></div>
<div class="td" style="left:0;width:119px;text-align:center;top:401px">7</div>
<div class="cb" style="left:153px;top:398px"></div>
<div class="td" style="left:243px;top:401px;font-size:26px">2024–06–05</div>
<div class="td" style="left:443px;top:402px">普通销售</div>
<div class="td" style="left:1122px;top:400px;font-size:25px;text-decoration:underline;text-underline-offset:2px">SO–20240605–001</div>
<div class="td" style="left:1522px;top:401px">测试客户</div>
<div class="td" style="left:2002px;top:401px">人民币</div>
<div class="td" style="left:2200px;width:106px;text-align:right;top:401px;font-size:25px">1.000</div>
<div class="abs" style="left:2306px;top:384px;width:200px;height:64px;background:#fff;border-bottom:2px solid #dedfe3;box-shadow:-6px 0 6px -4px rgba(0,0,0,0.12)"></div>
<svg class="abs" style="left:2364px;top:403px" width="28" height="26" viewBox="0 0 28 26"><path d="M17 2 H4 C3 2 2 3 2 4 V20 C2 21 3 22 4 22 H11 M20 9 V6 C20 3.5 19 2 17 2 M6 8 H14 M6 13 H10 M6 17 H9" fill="none" stroke="#333" stroke-width="2" stroke-linecap="round"/><circle cx="17" cy="17" r="4.5" fill="none" stroke="#333" stroke-width="2"/><path d="M20.5 20.5 L24 24" stroke="#333" stroke-width="2" stroke-linecap="round"/></svg>
<svg class="abs" style="left:2421px;top:404px" width="24" height="24" viewBox="0 0 24 24"><rect x="2" y="2" width="8" height="8" rx="2.5" fill="none" stroke="#333" stroke-width="2.2"/><rect x="14" y="2" width="8" height="8" rx="2.5" fill="none" stroke="#333" stroke-width="2.2"/><rect x="2" y="14" width="8" height="8" rx="2.5" fill="none" stroke="#333" stroke-width="2.2"/><path d="M22 17 V20 C22 21 21 22 20 22 H16 C15 22 14 21 14 20 V16 C14 15 15 14 16 14 H19" fill="none" stroke="#333" stroke-width="2.2" stroke-linecap="round"/></svg>
<div class="row" style="left:0;top:448px;background:#f0f1f6"></div>
<div class="td" style="left:0;width:119px;text-align:center;top:465px">8</div>
<div class="cb" style="left:153px;top:462px"></div>
<div class="td" style="left:243px;top:465px;font-size:26px">2024–06–17</div>
<div class="td" style="left:443px;top:466px">普通销售</div>
<div class="td" style="left:1122px;top:464px;font-size:25px;text-decoration:underline;text-underline-offset:2px">SO–20240617–002</div>
<div class="td" style="left:1522px;top:465px">零散客户</div>
<div class="td" style="left:2002px;top:465px">人民币</div>
<div class="td" style="left:2200px;width:106px;text-align:right;top:465px;font-size:25px">1.000</div>
<div class="abs" style="left:2306px;top:448px;width:200px;height:64px;background:#f0f1f6;border-bottom:2px solid #dedfe3;box-shadow:-6px 0 6px -4px rgba(0,0,0,0.12)"></div>
<svg class="abs" style="left:2364px;top:467px" width="28" height="26" viewBox="0 0 28 26"><path d="M17 2 H4 C3 2 2 3 2 4 V20 C2 21 3 22 4 22 H11 M20 9 V6 C20 3.5 19 2 17 2 M6 8 H14 M6 13 H10 M6 17 H9" fill="none" stroke="#333" stroke-width="2" stroke-linecap="round"/><circle cx="17" cy="17" r="4.5" fill="none" stroke="#333" stroke-width="2"/><path d="M20.5 20.5 L24 24" stroke="#333" stroke-width="2" stroke-linecap="round"/></svg>
<svg class="abs" style="left:2421px;top:468px" width="24" height="24" viewBox="0 0 24 24"><rect x="2" y="2" width="8" height="8" rx="2.5" fill="none" stroke="#333" stroke-width="2.2"/><rect x="14" y="2" width="8" height="8" rx="2.5" fill="none" stroke="#333" stroke-width="2.2"/><rect x="2" y="14" width="8" height="8" rx="2.5" fill="none" stroke="#333" stroke-width="2.2"/><path d="M22 17 V20 C22 21 21 22 20 22 H16 C15 22 14 21 14 20 V16 C14 15 15 14 16 14 H19" fill="none" stroke="#333" stroke-width="2.2" stroke-linecap="round"/></svg>
<div class="row" style="left:0;top:512px;background:#fff"></div>
<div class="td" style="left:0;width:119px;text-align:center;top:529px">9</div>
<div class="cb" style="left:153px;top:526px"></div>
<div class="td" style="left:243px;top:529px;font-size:26px">2024–07–04</div>
<div class="td" style="left:443px;top:530px">普通销售</div>
<div class="td" style="left:1122px;top:528px;font-size:25px;text-decoration:underline;text-underline-offset:2px">SO–20240704–001</div>
<div class="td" style="left:1522px;top:529px">张三</div>
<div class="td" style="left:2002px;top:529px">人民币</div>
<div class="td" style="left:2200px;width:106px;text-align:right;top:529px;font-size:25px">1.000</div>
<div class="abs" style="left:2306px;top:512px;width:200px;height:64px;background:#fff;border-bottom:2px solid #dedfe3;box-shadow:-6px 0 6px -4px rgba(0,0,0,0.12)"></div>
<svg class="abs" style="left:2364px;top:531px" width="28" height="26" viewBox="0 0 28 26"><path d="M17 2 H4 C3 2 2 3 2 4 V20 C2 21 3 22 4 22 H11 M20 9 V6 C20 3.5 19 2 17 2 M6 8 H14 M6 13 H10 M6 17 H9" fill="none" stroke="#333" stroke-width="2" stroke-linecap="round"/><circle cx="17" cy="17" r="4.5" fill="none" stroke="#333" stroke-width="2"/><path d="M20.5 20.5 L24 24" stroke="#333" stroke-width="2" stroke-linecap="round"/></svg>
<svg class="abs" style="left:2421px;top:532px" width="24" height="24" viewBox="0 0 24 24"><rect x="2" y="2" width="8" height="8" rx="2.5" fill="none" stroke="#333" stroke-width="2.2"/><rect x="14" y="2" width="8" height="8" rx="2.5" fill="none" stroke="#333" stroke-width="2.2"/><rect x="2" y="14" width="8" height="8" rx="2.5" fill="none" stroke="#333" stroke-width="2.2"/><path d="M22 17 V20 C22 21 21 22 20 22 H16 C15 22 14 21 14 20 V16 C14 15 15 14 16 14 H19" fill="none" stroke="#333" stroke-width="2.2" stroke-linecap="round"/></svg>
<div class="row" style="left:0;top:576px;background:#f0f1f6"></div>
<div class="td" style="left:0;width:119px;text-align:center;top:593px">10</div>
<div class="cb" style="left:153px;top:590px"></div>
<div class="td" style="left:243px;top:593px;font-size:26px">2024–07–09</div>
<div class="td" style="left:443px;top:594px">普通销售</div>
<div class="td" style="left:1122px;top:592px;font-size:25px;text-decoration:underline;text-underline-offset:2px">SO–20240709–001</div>
<div class="td" style="left:1522px;top:593px">测试客户</div>
<div class="td" style="left:2002px;top:593px">人民币</div>
<div class="td" style="left:2200px;width:106px;text-align:right;top:593px;font-size:25px">1.000</div>
<div class="abs" style="left:2306px;top:576px;width:200px;height:64px;background:#f0f1f6;border-bottom:2px solid #dedfe3;box-shadow:-6px 0 6px -4px rgba(0,0,0,0.12)"></div>
<svg class="abs" style="left:2364px;top:595px" width="28" height="26" viewBox="0 0 28 26"><path d="M17 2 H4 C3 2 2 3 2 4 V20 C2 21 3 22 4 22 H11 M20 9 V6 C20 3.5 19 2 17 2 M6 8 H14 M6 13 H10 M6 17 H9" fill="none" stroke="#333" stroke-width="2" stroke-linecap="round"/><circle cx="17" cy="17" r="4.5" fill="none" stroke="#333" stroke-width="2"/><path d="M20.5 20.5 L24 24" stroke="#333" stroke-width="2" stroke-linecap="round"/></svg>
<svg class="abs" style="left:2421px;top:596px" width="24" height="24" viewBox="0 0 24 24"><rect x="2" y="2" width="8" height="8" rx="2.5" fill="none" stroke="#333" stroke-width="2.2"/><rect x="14" y="2" width="8" height="8" rx="2.5" fill="none" stroke="#333" stroke-width="2.2"/><rect x="2" y="14" width="8" height="8" rx="2.5" fill="none" stroke="#333" stroke-width="2.2"/><path d="M22 17 V20 C22 21 21 22 20 22 H16 C15 22 14 21 14 20 V16 C14 15 15 14 16 14 H19" fill="none" stroke="#333" stroke-width="2.2" stroke-linecap="round"/></svg>
<div class="row" style="left:0;top:640px;background:#fff"></div>
<div class="td" style="left:0;width:119px;text-align:center;top:657px">11</div>
<div class="cb" style="left:153px;top:654px"></div>
<div class="td" style="left:243px;top:657px;font-size:26px">2024–08–09</div>
<div class="td" style="left:443px;top:658px">普通销售</div>
<div class="td" style="left:1122px;top:656px;font-size:25px;text-decoration:underline;text-underline-offset:2px">SO–20240809–001</div>
<div class="td" style="left:1522px;top:657px">测试客户</div>
<div class="td" style="left:2002px;top:657px">人民币</div>
<div class="td" style="left:2200px;width:106px;text-align:right;top:657px;font-size:25px">1.000</div>
<div class="abs" style="left:2306px;top:640px;width:200px;height:64px;background:#fff;border-bottom:2px solid #dedfe3;box-shadow:-6px 0 6px -4px rgba(0,0,0,0.12)"></div>
<svg class="abs" style="left:2364px;top:659px" width="28" height="26" viewBox="0 0 28 26"><path d="M17 2 H4 C3 2 2 3 2 4 V20 C2 21 3 22 4 22 H11 M20 9 V6 C20 3.5 19 2 17 2 M6 8 H14 M6 13 H10 M6 17 H9" fill="none" stroke="#333" stroke-width="2" stroke-linecap="round"/><circle cx="17" cy="17" r="4.5" fill="none" stroke="#333" stroke-width="2"/><path d="M20.5 20.5 L24 24" stroke="#333" stroke-width="2" stroke-linecap="round"/></svg>
<svg class="abs" style="left:2421px;top:660px" width="24" height="24" viewBox="0 0 24 24"><rect x="2" y="2" width="8" height="8" rx="2.5" fill="none" stroke="#333" stroke-width="2.2"/><rect x="14" y="2" width="8" height="8" rx="2.5" fill="none" stroke="#333" stroke-width="2.2"/><rect x="2" y="14" width="8" height="8" rx="2.5" fill="none" stroke="#333" stroke-width="2.2"/><path d="M22 17 V20 C22 21 21 22 20 22 H16 C15 22 14 21 14 20 V16 C14 15 15 14 16 14 H19" fill="none" stroke="#333" stroke-width="2.2" stroke-linecap="round"/></svg>
</div>
<div class="abs" style="left:2598px;top:414px;width:200px;height:64px;background:#e6e9f2;box-shadow:-6px 0 6px -4px rgba(0,0,0,0.12)"></div>
<div class="th" style="left:2674px;top:429px">操作</div>
<div class="abs" style="left:292px;top:1153px;width:2506px;height:68px;background:#faf0df;border-top:1px solid #e2ddd2;border-bottom:4px solid #dcdcdc"></div>
<div class="abs" style="left:506px;top:1153px;width:2px;height:98px;background:#d6d6d6"></div>
<div class="th" style="left:320px;top:1171px">合计:</div>
<div class="abs" style="left:292px;top:1234px;width:2506px;height:16px;background:linear-gradient(rgba(0,0,0,0),rgba(0,0,0,0.05))"></div>
<div class="abs" style="left:292px;top:1250px;width:2506px;height:2px;background:#c6c6c6"></div>
<div class="abs" style="left:2597px;top:1221px;width:2px;height:30px;background:#d6d6d6"></div>
<div class="abs" style="left:292px;top:1340px;width:2506px;height:2px;background:#f4f4f6"></div>
<div class="abs" style="left:230px;top:1371px;width:2638px;height:27px;background:linear-gradient(#eff0f3,#e8e9ed)"></div>
<div class="abs" style="left:1768px;top:1280px;font-size:24px;line-height:32px;color:#333">每页显示</div>
<div class="abs" style="left:1880px;top:1264px;width:120px;height:63px;border:2px solid #bdbdbd;border-radius:7px;background:#fff"></div>
<div class="abs" style="left:1897px;top:1280px;font-size:25px;line-height:32px;color:#222">50</div>
<svg class="abs" style="left:1960px;top:1285px" width="28" height="18"><path d="M2 2 L14 14 L26 2" fill="none" stroke="#333" stroke-width="2.2"/></svg>
<svg class="abs" style="left:2056px;top:1284px" width="20" height="26"><path d="M3 1 V25 M17 1 L7 13 L17 25" fill="none" stroke="#999" stroke-width="2.2"/></svg>
<svg class="abs" style="left:2110px;top:1284px" width="18" height="26"><path d="M15 1 L4 13 L15 25" fill="none" stroke="#999" stroke-width="2.2"/></svg>
<div class="abs" style="left:2156px;top:1280px;font-size:24px;line-height:32px;color:#333">第</div>
<div class="abs" style="left:2196px;top:1264px;width:120px;height:63px;border:2px solid #bdbdbd;border-radius:7px;background:#fff"></div>
<div class="abs" style="left:2212px;top:1280px;font-size:25px;line-height:32px;color:#222">1</div>
<div class="abs" style="left:2332px;top:1280px;font-size:24px;line-height:32px;color:#333">页</div>
<svg class="abs" style="left:2386px;top:1284px" width="18" height="26"><path d="M3 1 L14 13 L3 25" fill="none" stroke="#999" stroke-width="2.2"/></svg>
<svg class="abs" style="left:2436px;top:1284px" width="20" height="26"><path d="M17 1 V25 M3 1 L13 13 L3 25" fill="none" stroke="#999" stroke-width="2.2"/></svg>
<div class="abs" style="left:2509px;top:1280px;font-size:23px;line-height:32px;color:#333;letter-spacing:0.1px">共1页, 13条记录</div>
<div class="abs" style="left:18px;top:332px;width:218px;height:72px;border:5px solid #e2442c"></div>
<div class="abs" style="left:352px;top:56px;width:218px;height:72px;border:5px solid #e2442c"></div>
<div style="position:absolute;left:230px;top:0;width:2638px;height:1398px;overflow:hidden;pointer-events:none;color:rgba(0,0,0,0.07)"><div style="position:absolute;left:-230px;top:0"><div class="wm" style="left:30px;top:19px">电话：<span style="letter-spacing:3.2px">400-665-0028</span><br>网址：<span style="letter-spacing:1.2px">www.chanjet.net</span></div><div class="wm" style="left:301px;top:19px">电话：<span style="letter-spacing:3.2px">400-665-0028</span><br>网址：<span style="letter-spacing:1.2px">www.chanjet.net</span></div><div class="wm" style="left:572px;top:19px">电话：<span style="letter-spacing:3.2px">400-665-0028</span><br>网址：<span style="letter-spacing:1.2px">www.chanjet.net</span></div><div class="wm" style="left:843px;top:19px">电话：<span style="letter-spacing:3.2px">400-665-0028</span><br>网址：<span style="letter-spacing:1.2px">www.chanjet.net</span></div><div class="wm" style="left:1114px;top:19px">电话：<span style="letter-spacing:3.2px">400-665-0028</span><br>网址：<span style="letter-spacing:1.2px">www.chanjet.net</span></div><div class="wm" style="left:1385px;top:19px">电话：<span style="letter-spacing:3.2px">400-665-0028</span><br>网址：<span style="letter-spacing:1.2px">www.chanjet.net</span></div><div class="wm" style="left:1656px;top:19px">电话：<span style="letter-spacing:3.2px">400-665-0028</span><br>网址：<span style="letter-spacing:1.2px">www.chanjet.net</span></div><div class="wm" style="left:1927px;top:19px">电话：<span style="letter-spacing:3.2px">400-665-0028</span><br>网址：<span style="letter-spacing:1.2px">www.chanjet.net</span></div><div class="wm" style="left:2198px;top:19px">电话：<span style="letter-spacing:3.2px">400-665-0028</span><br>网址：<span style="letter-spacing:1.2px">www.chanjet.net</span></div><div class="wm" style="left:2469px;top:19px">电话：<span style="letter-spacing:3.2px">400-665-0028</span><br>网址：<span style="letter-spacing:1.2px">www.chanjet.net</span></div><div class="wm" style="left:2740px;top:19px">电话：<span style="letter-spacing:3.2px">400-665-0028</span><br>网址：<span style="letter-spacing:1.2px">www.chanjet.net</span></div><div class="wm" style="left:3011px;top:19px">电话：<span style="letter-spacing:3.2px">400-665-0028</span><br>网址：<span style="letter-spacing:1.2px">www.chanjet.net</span></div><div class="wm" style="left:30px;top:129px">电话：<span style="letter-spacing:3.2px">400-665-0028</span><br>网址：<span style="letter-spacing:1.2px">www.chanjet.net</span></div><div class="wm" style="left:301px;top:129px">电话：<span style="letter-spacing:3.2px">400-665-0028</span><br>网址：<span style="letter-spacing:1.2px">www.chanjet.net</span></div><div class="wm" style="left:572px;top:129px">电话：<span style="letter-spacing:3.2px">400-665-0028</span><br>网址：<span style="letter-spacing:1.2px">www.chanjet.net</span></div><div class="wm" style="left:843px;top:129px">电话：<span style="letter-spacing:3.2px">400-665-0028</span><br>网址：<span style="letter-spacing:1.2px">www.chanjet.net</span></div><div class="wm" style="left:1114px;top:129px">电话：<span style="letter-spacing:3.2px">400-665-0028</span><br>网址：<span style="letter-spacing:1.2px">www.chanjet.net</span></div><div class="wm" style="left:1385px;top:129px">电话：<span style="letter-spacing:3.2px">400-665-0028</span><br>网址：<span style="letter-spacing:1.2px">www.chanjet.net</span></div><div class="wm" style="left:1656px;top:129px">电话：<span style="letter-spacing:3.2px">400-665-0028</span><br>网址：<span style="letter-spacing:1.2px">www.chanjet.net</span></div><div class="wm" style="left:1927px;top:129px">电话：<span style="letter-spacing:3.2px">400-665-0028</span><br>网址：<span style="letter-spacing:1.2px">www.chanjet.net</span></div><div class="wm" style="left:2198px;top:129px">电话：<span style="letter-spacing:3.2px">400-665-0028</span><br>网址：<span style="letter-spacing:1.2px">www.chanjet.net</span></div><div class="wm" style="left:2469px;top:129px">电话：<span style="letter-spacing:3.2px">400-665-0028</span><br>网址：<span style="letter-spacing:1.2px">www.chanjet.net</span></div><div class="wm" style="left:2740px;top:129px">电话：<span style="letter-spacing:3.2px">400-665-0028</span><br>网址：<span style="letter-spacing:1.2px">www.chanjet.net</span></div><div class="wm" style="left:3011px;top:129px">电话：<span style="letter-spacing:3.2px">400-665-0028</span><br>网址：<span style="letter-spacing:1.2px">www.chanjet.net</span></div><div class="wm" style="left:30px;top:239px">电话：<span style="letter-spacing:3.2px">400-665-0028</span><br>网址：<span style="letter-spacing:1.2px">www.chanjet.net</span></div><div class="wm" style="left:301px;top:239px">电话：<span style="letter-spacing:3.2px">400-665-0028</span><br>网址：<span style="letter-spacing:1.2px">www.chanjet.net</span></div><div class="wm" style="left:572px;top:239px">电话：<span style="letter-spacing:3.2px">400-665-0028</span><br>网址：<span style="letter-spacing:1.2px">www.chanjet.net</span></div><div class="wm" style="left:843px;top:239px">电话：<span style="letter-spacing:3.2px">400-665-0028</span><br>网址：<span style="letter-spacing:1.2px">www.chanjet.net</span></div><div class="wm" style="left:1114px;top:239px">电话：<span style="letter-spacing:3.2px">400-665-0028</span><br>网址：<span style="letter-spacing:1.2px">www.chanjet.net</span></div><div class="wm" style="left:1385px;top:239px">电话：<span style="letter-spacing:3.2px">400-665-0028</span><br>网址：<span style="letter-spacing:1.2px">www.chanjet.net</span></div><div class="wm" style="left:1656px;top:239px">电话：<span style="letter-spacing:3.2px">400-665-0028</span><br>网址：<span style="letter-spacing:1.2px">www.chanjet.net</span></div><div class="wm" style="left:1927px;top:239px">电话：<span style="letter-spacing:3.2px">400-665-0028</span><br>网址：<span style="letter-spacing:1.2px">www.chanjet.net</span></div><div class="wm" style="left:2198px;top:239px">电话：<span style="letter-spacing:3.2px">400-665-0028</span><br>网址：<span style="letter-spacing:1.2px">www.chanjet.net</span></div><div class="wm" style="left:2469px;top:239px">电话：<span style="letter-spacing:3.2px">400-665-0028</span><br>网址：<span style="letter-spacing:1.2px">www.chanjet.net</span></div><div class="wm" style="left:2740px;top:239px">电话：<span style="letter-spacing:3.2px">400-665-0028</span><br>网址：<span style="letter-spacing:1.2px">www.chanjet.net</span></div><div class="wm" style="left:3011px;top:239px">电话：<span style="letter-spacing:3.2px">400-665-0028</span><br>网址：<span style="letter-spacing:1.2px">www.chanjet.net</span></div><div class="wm" style="left:30px;top:349px">电话：<span style="letter-spacing:3.2px">400-665-0028</span><br>网址：<span style="letter-spacing:1.2px">www.chanjet.net</span></div><div class="wm" style="left:301px;top:349px">电话：<span style="letter-spacing:3.2px">400-665-0028</span><br>网址：<span style="letter-spacing:1.2px">www.chanjet.net</span></div><div class="wm" style="left:572px;top:349px">电话：<span style="letter-spacing:3.2px">400-665-0028</span><br>网址：<span style="letter-spacing:1.2px">www.chanjet.net</span></div><div class="wm" style="left:843px;top:349px">电话：<span style="letter-spacing:3.2px">400-665-0028</span><br>网址：<span style="letter-spacing:1.2px">www.chanjet.net</span></div><div class="wm" style="left:1114px;top:349px">电话：<span style="letter-spacing:3.2px">400-665-0028</span><br>网址：<span style="letter-spacing:1.2px">www.chanjet.net</span></div><div class="wm" style="left:1385px;top:349px">电话：<span style="letter-spacing:3.2px">400-665-0028</span><br>网址：<span style="letter-spacing:1.2px">www.chanjet.net</span></div><div class="wm" style="left:1656px;top:349px">电话：<span style="letter-spacing:3.2px">400-665-0028</span><br>网址：<span style="letter-spacing:1.2px">www.chanjet.net</span></div><div class="wm" style="left:1927px;top:349px">电话：<span style="letter-spacing:3.2px">400-665-0028</span><br>网址：<span style="letter-spacing:1.2px">www.chanjet.net</span></div><div class="wm" style="left:2198px;top:349px">电话：<span style="letter-spacing:3.2px">400-665-0028</span><br>网址：<span style="letter-spacing:1.2px">www.chanjet.net</span></div><div class="wm" style="left:2469px;top:349px">电话：<span style="letter-spacing:3.2px">400-665-0028</span><br>网址：<span style="letter-spacing:1.2px">www.chanjet.net</span></div><div class="wm" style="left:2740px;top:349px">电话：<span style="letter-spacing:3.2px">400-665-0028</span><br>网址：<span style="letter-spacing:1.2px">www.chanjet.net</span></div><div class="wm" style="left:3011px;top:349px">电话：<span style="letter-spacing:3.2px">400-665-0028</span><br>网址：<span style="letter-spacing:1.2px">www.chanjet.net</span></div><div class="wm" style="left:30px;top:459px">电话：<span style="letter-spacing:3.2px">400-665-0028</span><br>网址：<span style="letter-spacing:1.2px">www.chanjet.net</span></div><div class="wm" style="left:301px;top:459px">电话：<span style="letter-spacing:3.2px">400-665-0028</span><br>网址：<span style="letter-spacing:1.2px">www.chanjet.net</span></div><div class="wm" style="left:572px;top:459px">电话：<span style="letter-spacing:3.2px">400-665-0028</span><br>网址：<span style="letter-spacing:1.2px">www.chanjet.net</span></div><div class="wm" style="left:843px;top:459px">电话：<span style="letter-spacing:3.2px">400-665-0028</span><br>网址：<span style="letter-spacing:1.2px">www.chanjet.net</span></div><div class="wm" style="left:1114px;top:459px">电话：<span style="letter-spacing:3.2px">400-665-0028</span><br>网址：<span style="letter-spacing:1.2px">www.chanjet.net</span></div><div class="wm" style="left:1385px;top:459px">电话：<span style="letter-spacing:3.2px">400-665-0028</span><br>网址：<span style="letter-spacing:1.2px">www.chanjet.net</span></div><div class="wm" style="left:1656px;top:459px">电话：<span style="letter-spacing:3.2px">400-665-0028</span><br>网址：<span style="letter-spacing:1.2px">www.chanjet.net</span></div><div class="wm" style="left:1927px;top:459px">电话：<span style="letter-spacing:3.2px">400-665-0028</span><br>网址：<span style="letter-spacing:1.2px">www.chanjet.net</span></div><div class="wm" style="left:2198px;top:459px">电话：<span style="letter-spacing:3.2px">400-665-0028</span><br>网址：<span style="letter-spacing:1.2px">www.chanjet.net</span></div><div class="wm" style="left:2469px;top:459px">电话：<span style="letter-spacing:3.2px">400-665-0028</span><br>网址：<span style="letter-spacing:1.2px">www.chanjet.net</span></div><div class="wm" style="left:2740px;top:459px">电话：<span style="letter-spacing:3.2px">400-665-0028</span><br>网址：<span style="letter-spacing:1.2px">www.chanjet.net</span></div><div class="wm" style="left:3011px;top:459px">电话：<span style="letter-spacing:3.2px">400-665-0028</span><br>网址：<span style="letter-spacing:1.2px">www.chanjet.net</span></div><div class="wm" style="left:30px;top:569px">电话：<span style="letter-spacing:3.2px">400-665-0028</span><br>网址：<span style="letter-spacing:1.2px">www.chanjet.net</span></div><div class="wm" style="left:301px;top:569px">电话：<span style="letter-spacing:3.2px">400-665-0028</span><br>网址：<span style="letter-spacing:1.2px">www.chanjet.net</span></div><div class="wm" style="left:572px;top:569px">电话：<span style="letter-spacing:3.2px">400-665-0028</span><br>网址：<span style="letter-spacing:1.2px">www.chanjet.net</span></div><div class="wm" style="left:843px;top:569px">电话：<span style="letter-spacing:3.2px">400-665-0028</span><br>网址：<span style="letter-spacing:1.2px">www.chanjet.net</span></div><div class="wm" style="left:1114px;top:569px">电话：<span style="letter-spacing:3.2px">400-665-0028</span><br>网址：<span style="letter-spacing:1.2px">www.chanjet.net</span></div><div class="wm" style="left:1385px;top:569px">电话：<span style="letter-spacing:3.2px">400-665-0028</span><br>网址：<span style="letter-spacing:1.2px">www.chanjet.net</span></div><div class="wm" style="left:1656px;top:569px">电话：<span style="letter-spacing:3.2px">400-665-0028</span><br>网址：<span style="letter-spacing:1.2px">www.chanjet.net</span></div><div class="wm" style="left:1927px;top:569px">电话：<span style="letter-spacing:3.2px">400-665-0028</span><br>网址：<span style="letter-spacing:1.2px">www.chanjet.net</span></div><div class="wm" style="left:2198px;top:569px">电话：<span style="letter-spacing:3.2px">400-665-0028</span><br>网址：<span style="letter-spacing:1.2px">www.chanjet.net</span></div><div class="wm" style="left:2469px;top:569px">电话：<span style="letter-spacing:3.2px">400-665-0028</span><br>网址：<span style="letter-spacing:1.2px">www.chanjet.net</span></div><div class="wm" style="left:2740px;top:569px">电话：<span style="letter-spacing:3.2px">400-665-0028</span><br>网址：<span style="letter-spacing:1.2px">www.chanjet.net</span></div><div class="wm" style="left:3011px;top:569px">电话：<span style="letter-spacing:3.2px">400-665-0028</span><br>网址：<span style="letter-spacing:1.2px">www.chanjet.net</span></div><div class="wm" style="left:30px;top:679px">电话：<span style="letter-spacing:3.2px">400-665-0028</span><br>网址：<span style="letter-spacing:1.2px">www.chanjet.net</span></div><div class="wm" style="left:301px;top:679px">电话：<span style="letter-spacing:3.2px">400-665-0028</span><br>网址：<span style="letter-spacing:1.2px">www.chanjet.net</span></div><div class="wm" style="left:572px;top:679px">电话：<span style="letter-spacing:3.2px">400-665-0028</span><br>网址：<span style="letter-spacing:1.2px">www.chanjet.net</span></div><div class="wm" style="left:843px;top:679px">电话：<span style="letter-spacing:3.2px">400-665-0028</span><br>网址：<span style="letter-spacing:1.2px">www.chanjet.net</span></div><div class="wm" style="left:1114px;top:679px">电话：<span style="letter-spacing:3.2px">400-665-0028</span><br>网址：<span style="letter-spacing:1.2px">www.chanjet.net</span></div><div class="wm" style="left:1385px;top:679px">电话：<span style="letter-spacing:3.2px">400-665-0028</span><br>网址：<span style="letter-spacing:1.2px">www.chanjet.net</span></div><div class="wm" style="left:1656px;top:679px">电话：<span style="letter-spacing:3.2px">400-665-0028</span><br>网址：<span style="letter-spacing:1.2px">www.chanjet.net</span></div><div class="wm" style="left:1927px;top:679px">电话：<span style="letter-spacing:3.2px">400-665-0028</span><br>网址：<span style="letter-spacing:1.2px">www.chanjet.net</span></div><div class="wm" style="left:2198px;top:679px">电话：<span style="letter-spacing:3.2px">400-665-0028</span><br>网址：<span style="letter-spacing:1.2px">www.chanjet.net</span></div><div class="wm" style="left:2469px;top:679px">电话：<span style="letter-spacing:3.2px">400-665-0028</span><br>网址：<span style="letter-spacing:1.2px">www.chanjet.net</span></div><div class="wm" style="left:2740px;top:679px">电话：<span style="letter-spacing:3.2px">400-665-0028</span><br>网址：<span style="letter-spacing:1.2px">www.chanjet.net</span></div><div class="wm" style="left:3011px;top:679px">电话：<span style="letter-spacing:3.2px">400-665-0028</span><br>网址：<span style="letter-spacing:1.2px">www.chanjet.net</span></div><div class="wm" style="left:30px;top:789px">电话：<span style="letter-spacing:3.2px">400-665-0028</span><br>网址：<span style="letter-spacing:1.2px">www.chanjet.net</span></div><div class="wm" style="left:301px;top:789px">电话：<span style="letter-spacing:3.2px">400-665-0028</span><br>网址：<span style="letter-spacing:1.2px">www.chanjet.net</span></div><div class="wm" style="left:572px;top:789px">电话：<span style="letter-spacing:3.2px">400-665-0028</span><br>网址：<span style="letter-spacing:1.2px">www.chanjet.net</span></div><div class="wm" style="left:843px;top:789px">电话：<span style="letter-spacing:3.2px">400-665-0028</span><br>网址：<span style="letter-spacing:1.2px">www.chanjet.net</span></div><div class="wm" style="left:1114px;top:789px">电话：<span style="letter-spacing:3.2px">400-665-0028</span><br>网址：<span style="letter-spacing:1.2px">www.chanjet.net</span></div><div class="wm" style="left:1385px;top:789px">电话：<span style="letter-spacing:3.2px">400-665-0028</span><br>网址：<span style="letter-spacing:1.2px">www.chanjet.net</span></div><div class="wm" style="left:1656px;top:789px">电话：<span style="letter-spacing:3.2px">400-665-0028</span><br>网址：<span style="letter-spacing:1.2px">www.chanjet.net</span></div><div class="wm" style="left:1927px;top:789px">电话：<span style="letter-spacing:3.2px">400-665-0028</span><br>网址：<span style="letter-spacing:1.2px">www.chanjet.net</span></div><div class="wm" style="left:2198px;top:789px">电话：<span style="letter-spacing:3.2px">400-665-0028</span><br>网址：<span style="letter-spacing:1.2px">www.chanjet.net</span></div><div class="wm" style="left:2469px;top:789px">电话：<span style="letter-spacing:3.2px">400-665-0028</span><br>网址：<span style="letter-spacing:1.2px">www.chanjet.net</span></div><div class="wm" style="left:2740px;top:789px">电话：<span style="letter-spacing:3.2px">400-665-0028</span><br>网址：<span style="letter-spacing:1.2px">www.chanjet.net</span></div><div class="wm" style="left:3011px;top:789px">电话：<span style="letter-spacing:3.2px">400-665-0028</span><br>网址：<span style="letter-spacing:1.2px">www.chanjet.net</span></div><div class="wm" style="left:30px;top:899px">电话：<span style="letter-spacing:3.2px">400-665-0028</span><br>网址：<span style="letter-spacing:1.2px">www.chanjet.net</span></div><div class="wm" style="left:301px;top:899px">电话：<span style="letter-spacing:3.2px">400-665-0028</span><br>网址：<span style="letter-spacing:1.2px">www.chanjet.net</span></div><div class="wm" style="left:572px;top:899px">电话：<span style="letter-spacing:3.2px">400-665-0028</span><br>网址：<span style="letter-spacing:1.2px">www.chanjet.net</span></div><div class="wm" style="left:843px;top:899px">电话：<span style="letter-spacing:3.2px">400-665-0028</span><br>网址：<span style="letter-spacing:1.2px">www.chanjet.net</span></div><div class="wm" style="left:1114px;top:899px">电话：<span style="letter-spacing:3.2px">400-665-0028</span><br>网址：<span style="letter-spacing:1.2px">www.chanjet.net</span></div><div class="wm" style="left:1385px;top:899px">电话：<span style="letter-spacing:3.2px">400-665-0028</span><br>网址：<span style="letter-spacing:1.2px">www.chanjet.net</span></div><div class="wm" style="left:1656px;top:899px">电话：<span style="letter-spacing:3.2px">400-665-0028</span><br>网址：<span style="letter-spacing:1.2px">www.chanjet.net</span></div><div class="wm" style="left:1927px;top:899px">电话：<span style="letter-spacing:3.2px">400-665-0028</span><br>网址：<span style="letter-spacing:1.2px">www.chanjet.net</span></div><div class="wm" style="left:2198px;top:899px">电话：<span style="letter-spacing:3.2px">400-665-0028</span><br>网址：<span style="letter-spacing:1.2px">www.chanjet.net</span></div><div class="wm" style="left:2469px;top:899px">电话：<span style="letter-spacing:3.2px">400-665-0028</span><br>网址：<span style="letter-spacing:1.2px">www.chanjet.net</span></div><div class="wm" style="left:2740px;top:899px">电话：<span style="letter-spacing:3.2px">400-665-0028</span><br>网址：<span style="letter-spacing:1.2px">www.chanjet.net</span></div><div class="wm" style="left:3011px;top:899px">电话：<span style="letter-spacing:3.2px">400-665-0028</span><br>网址：<span style="letter-spacing:1.2px">www.chanjet.net</span></div><div class="wm" style="left:30px;top:1009px">电话：<span style="letter-spacing:3.2px">400-665-0028</span><br>网址：<span style="letter-spacing:1.2px">www.chanjet.net</span></div><div class="wm" style="left:301px;top:1009px">电话：<span style="letter-spacing:3.2px">400-665-0028</span><br>网址：<span style="letter-spacing:1.2px">www.chanjet.net</span></div><div class="wm" style="left:572px;top:1009px">电话：<span style="letter-spacing:3.2px">400-665-0028</span><br>网址：<span style="letter-spacing:1.2px">www.chanjet.net</span></div><div class="wm" style="left:843px;top:1009px">电话：<span style="letter-spacing:3.2px">400-665-0028</span><br>网址：<span style="letter-spacing:1.2px">www.chanjet.net</span></div><div class="wm" style="left:1114px;top:1009px">电话：<span style="letter-spacing:3.2px">400-665-0028</span><br>网址：<span style="letter-spacing:1.2px">www.chanjet.net</span></div><div class="wm" style="left:1385px;top:1009px">电话：<span style="letter-spacing:3.2px">400-665-0028</span><br>网址：<span style="letter-spacing:1.2px">www.chanjet.net</span></div><div class="wm" style="left:1656px;top:1009px">电话：<span style="letter-spacing:3.2px">400-665-0028</span><br>网址：<span style="letter-spacing:1.2px">www.chanjet.net</span></div><div class="wm" style="left:1927px;top:1009px">电话：<span style="letter-spacing:3.2px">400-665-0028</span><br>网址：<span style="letter-spacing:1.2px">www.chanjet.net</span></div><div class="wm" style="left:2198px;top:1009px">电话：<span style="letter-spacing:3.2px">400-665-0028</span><br>网址：<span style="letter-spacing:1.2px">www.chanjet.net</span></div><div class="wm" style="left:2469px;top:1009px">电话：<span style="letter-spacing:3.2px">400-665-0028</span><br>网址：<span style="letter-spacing:1.2px">www.chanjet.net</span></div><div class="wm" style="left:2740px;top:1009px">电话：<span style="letter-spacing:3.2px">400-665-0028</span><br>网址：<span style="letter-spacing:1.2px">www.chanjet.net</span></div><div class="wm" style="left:3011px;top:1009px">电话：<span style="letter-spacing:3.2px">400-665-0028</span><br>网址：<span style="letter-spacing:1.2px">www.chanjet.net</span></div><div class="wm" style="left:30px;top:1119px">电话：<span style="letter-spacing:3.2px">400-665-0028</span><br>网址：<span style="letter-spacing:1.2px">www.chanjet.net</span></div><div class="wm" style="left:301px;top:1119px">电话：<span style="letter-spacing:3.2px">400-665-0028</span><br>网址：<span style="letter-spacing:1.2px">www.chanjet.net</span></div><div class="wm" style="left:572px;top:1119px">电话：<span style="letter-spacing:3.2px">400-665-0028</span><br>网址：<span style="letter-spacing:1.2px">www.chanjet.net</span></div><div class="wm" style="left:843px;top:1119px">电话：<span style="letter-spacing:3.2px">400-665-0028</span><br>网址：<span style="letter-spacing:1.2px">www.chanjet.net</span></div><div class="wm" style="left:1114px;top:1119px">电话：<span style="letter-spacing:3.2px">400-665-0028</span><br>网址：<span style="letter-spacing:1.2px">www.chanjet.net</span></div><div class="wm" style="left:1385px;top:1119px">电话：<span style="letter-spacing:3.2px">400-665-0028</span><br>网址：<span style="letter-spacing:1.2px">www.chanjet.net</span></div><div class="wm" style="left:1656px;top:1119px">电话：<span style="letter-spacing:3.2px">400-665-0028</span><br>网址：<span style="letter-spacing:1.2px">www.chanjet.net</span></div><div class="wm" style="left:1927px;top:1119px">电话：<span style="letter-spacing:3.2px">400-665-0028</span><br>网址：<span style="letter-spacing:1.2px">www.chanjet.net</span></div><div class="wm" style="left:2198px;top:1119px">电话：<span style="letter-spacing:3.2px">400-665-0028</span><br>网址：<span style="letter-spacing:1.2px">www.chanjet.net</span></div><div class="wm" style="left:2469px;top:1119px">电话：<span style="letter-spacing:3.2px">400-665-0028</span><br>网址：<span style="letter-spacing:1.2px">www.chanjet.net</span></div><div class="wm" style="left:2740px;top:1119px">电话：<span style="letter-spacing:3.2px">400-665-0028</span><br>网址：<span style="letter-spacing:1.2px">www.chanjet.net</span></div><div class="wm" style="left:3011px;top:1119px">电话：<span style="letter-spacing:3.2px">400-665-0028</span><br>网址：<span style="letter-spacing:1.2px">www.chanjet.net</span></div><div class="wm" style="left:30px;top:1229px">电话：<span style="letter-spacing:3.2px">400-665-0028</span><br>网址：<span style="letter-spacing:1.2px">www.chanjet.net</span></div><div class="wm" style="left:301px;top:1229px">电话：<span style="letter-spacing:3.2px">400-665-0028</span><br>网址：<span style="letter-spacing:1.2px">www.chanjet.net</span></div><div class="wm" style="left:572px;top:1229px">电话：<span style="letter-spacing:3.2px">400-665-0028</span><br>网址：<span style="letter-spacing:1.2px">www.chanjet.net</span></div><div class="wm" style="left:843px;top:1229px">电话：<span style="letter-spacing:3.2px">400-665-0028</span><br>网址：<span style="letter-spacing:1.2px">www.chanjet.net</span></div><div class="wm" style="left:1114px;top:1229px">电话：<span style="letter-spacing:3.2px">400-665-0028</span><br>网址：<span style="letter-spacing:1.2px">www.chanjet.net</span></div><div class="wm" style="left:1385px;top:1229px">电话：<span style="letter-spacing:3.2px">400-665-0028</span><br>网址：<span style="letter-spacing:1.2px">www.chanjet.net</span></div><div class="wm" style="left:1656px;top:1229px">电话：<span style="letter-spacing:3.2px">400-665-0028</span><br>网址：<span style="letter-spacing:1.2px">www.chanjet.net</span></div><div class="wm" style="left:1927px;top:1229px">电话：<span style="letter-spacing:3.2px">400-665-0028</span><br>网址：<span style="letter-spacing:1.2px">www.chanjet.net</span></div><div class="wm" style="left:2198px;top:1229px">电话：<span style="letter-spacing:3.2px">400-665-0028</span><br>网址：<span style="letter-spacing:1.2px">www.chanjet.net</span></div><div class="wm" style="left:2469px;top:1229px">电话：<span style="letter-spacing:3.2px">400-665-0028</span><br>网址：<span style="letter-spacing:1.2px">www.chanjet.net</span></div><div class="wm" style="left:2740px;top:1229px">电话：<span style="letter-spacing:3.2px">400-665-0028</span><br>网址：<span style="letter-spacing:1.2px">www.chanjet.net</span></div><div class="wm" style="left:3011px;top:1229px">电话：<span style="letter-spacing:3.2px">400-665-0028</span><br>网址：<span style="letter-spacing:1.2px">www.chanjet.net</span></div><div class="wm" style="left:30px;top:1339px">电话：<span style="letter-spacing:3.2px">400-665-0028</span><br>网址：<span style="letter-spacing:1.2px">www.chanjet.net</span></div><div class="wm" style="left:301px;top:1339px">电话：<span style="letter-spacing:3.2px">400-665-0028</span><br>网址：<span style="letter-spacing:1.2px">www.chanjet.net</span></div><div class="wm" style="left:572px;top:1339px">电话：<span style="letter-spacing:3.2px">400-665-0028</span><br>网址：<span style="letter-spacing:1.2px">www.chanjet.net</span></div><div class="wm" style="left:843px;top:1339px">电话：<span style="letter-spacing:3.2px">400-665-0028</span><br>网址：<span style="letter-spacing:1.2px">www.chanjet.net</span></div><div class="wm" style="left:1114px;top:1339px">电话：<span style="letter-spacing:3.2px">400-665-0028</span><br>网址：<span style="letter-spacing:1.2px">www.chanjet.net</span></div><div class="wm" style="left:1385px;top:1339px">电话：<span style="letter-spacing:3.2px">400-665-0028</span><br>网址：<span style="letter-spacing:1.2px">www.chanjet.net</span></div><div class="wm" style="left:1656px;top:1339px">电话：<span style="letter-spacing:3.2px">400-665-0028</span><br>网址：<span style="letter-spacing:1.2px">www.chanjet.net</span></div><div class="wm" style="left:1927px;top:1339px">电话：<span style="letter-spacing:3.2px">400-665-0028</span><br>网址：<span style="letter-spacing:1.2px">www.chanjet.net</span></div><div class="wm" style="left:2198px;top:1339px">电话：<span style="letter-spacing:3.2px">400-665-0028</span><br>网址：<span style="letter-spacing:1.2px">www.chanjet.net</span></div><div class="wm" style="left:2469px;top:1339px">电话：<span style="letter-spacing:3.2px">400-665-0028</span><br>网址：<span style="letter-spacing:1.2px">www.chanjet.net</span></div><div class="wm" style="left:2740px;top:1339px">电话：<span style="letter-spacing:3.2px">400-665-0028</span><br>网址：<span style="letter-spacing:1.2px">www.chanjet.net</span></div><div class="wm" style="left:3011px;top:1339px">电话：<span style="letter-spacing:3.2px">400-665-0028</span><br>网址：<span style="letter-spacing:1.2px">www.chanjet.net</span></div><div class="wm" style="left:30px;top:1449px">电话：<span style="letter-spacing:3.2px">400-665-0028</span><br>网址：<span style="letter-spacing:1.2px">www.chanjet.net</span></div><div class="wm" style="left:301px;top:1449px">电话：<span style="letter-spacing:3.2px">400-665-0028</span><br>网址：<span style="letter-spacing:1.2px">www.chanjet.net</span></div><div class="wm" style="left:572px;top:1449px">电话：<span style="letter-spacing:3.2px">400-665-0028</span><br>网址：<span style="letter-spacing:1.2px">www.chanjet.net</span></div><div class="wm" style="left:843px;top:1449px">电话：<span style="letter-spacing:3.2px">400-665-0028</span><br>网址：<span style="letter-spacing:1.2px">www.chanjet.net</span></div><div class="wm" style="left:1114px;top:1449px">电话：<span style="letter-spacing:3.2px">400-665-0028</span><br>网址：<span style="letter-spacing:1.2px">www.chanjet.net</span></div><div class="wm" style="left:1385px;top:1449px">电话：<span style="letter-spacing:3.2px">400-665-0028</span><br>网址：<span style="letter-spacing:1.2px">www.chanjet.net</span></div><div class="wm" style="left:1656px;top:1449px">电话：<span style="letter-spacing:3.2px">400-665-0028</span><br>网址：<span style="letter-spacing:1.2px">www.chanjet.net</span></div><div class="wm" style="left:1927px;top:1449px">电话：<span style="letter-spacing:3.2px">400-665-0028</span><br>网址：<span style="letter-spacing:1.2px">www.chanjet.net</span></div><div class="wm" style="left:2198px;top:1449px">电话：<span style="letter-spacing:3.2px">400-665-0028</span><br>网址：<span style="letter-spacing:1.2px">www.chanjet.net</span></div><div class="wm" style="left:2469px;top:1449px">电话：<span style="letter-spacing:3.2px">400-665-0028</span><br>网址：<span style="letter-spacing:1.2px">www.chanjet.net</span></div><div class="wm" style="left:2740px;top:1449px">电话：<span style="letter-spacing:3.2px">400-665-0028</span><br>网址：<span style="letter-spacing:1.2px">www.chanjet.net</span></div><div class="wm" style="left:3011px;top:1449px">电话：<span style="letter-spacing:3.2px">400-665-0028</span><br>网址：<span style="letter-spacing:1.2px">www.chanjet.net</span></div></div></div>
<div style="position:absolute;left:0;top:0;width:230px;height:1398px;overflow:hidden;pointer-events:none;color:rgba(255,255,255,0.025)"><div class="wm" style="left:30px;top:19px">电话：<span style="letter-spacing:3.2px">400-665-0028</span><br>网址：<span style="letter-spacing:1.2px">www.chanjet.net</span></div><div class="wm" style="left:30px;top:129px">电话：<span style="letter-spacing:3.2px">400-665-0028</span><br>网址：<span style="letter-spacing:1.2px">www.chanjet.net</span></div><div class="wm" style="left:30px;top:239px">电话：<span style="letter-spacing:3.2px">400-665-0028</span><br>网址：<span style="letter-spacing:1.2px">www.chanjet.net</span></div><div class="wm" style="left:30px;top:349px">电话：<span style="letter-spacing:3.2px">400-665-0028</span><br>网址：<span style="letter-spacing:1.2px">www.chanjet.net</span></div><div class="wm" style="left:30px;top:459px">电话：<span style="letter-spacing:3.2px">400-665-0028</span><br>网址：<span style="letter-spacing:1.2px">www.chanjet.net</span></div><div class="wm" style="left:30px;top:569px">电话：<span style="letter-spacing:3.2px">400-665-0028</span><br>网址：<span style="letter-spacing:1.2px">www.chanjet.net</span></div><div class="wm" style="left:30px;top:679px">电话：<span style="letter-spacing:3.2px">400-665-0028</span><br>网址：<span style="letter-spacing:1.2px">www.chanjet.net</span></div><div class="wm" style="left:30px;top:789px">电话：<span style="letter-spacing:3.2px">400-665-0028</span><br>网址：<span style="letter-spacing:1.2px">www.chanjet.net</span></div><div class="wm" style="left:30px;top:899px">电话：<span style="letter-spacing:3.2px">400-665-0028</span><br>网址：<span style="letter-spacing:1.2px">www.chanjet.net</span></div><div class="wm" style="left:30px;top:1009px">电话：<span style="letter-spacing:3.2px">400-665-0028</span><br>网址：<span style="letter-spacing:1.2px">www.chanjet.net</span></div><div class="wm" style="left:30px;top:1119px">电话：<span style="letter-spacing:3.2px">400-665-0028</span><br>网址：<span style="letter-spacing:1.2px">www.chanjet.net</span></div><div class="wm" style="left:30px;top:1229px">电话：<span style="letter-spacing:3.2px">400-665-0028</span><br>网址：<span style="letter-spacing:1.2px">www.chanjet.net</span></div><div class="wm" style="left:30px;top:1339px">电话：<span style="letter-spacing:3.2px">400-665-0028</span><br>网址：<span style="letter-spacing:1.2px">www.chanjet.net</span></div><div class="wm" style="left:30px;top:1449px">电话：<span style="letter-spacing:3.2px">400-665-0028</span><br>网址：<span style="letter-spacing:1.2px">www.chanjet.net</span></div></div>
</body></html>
